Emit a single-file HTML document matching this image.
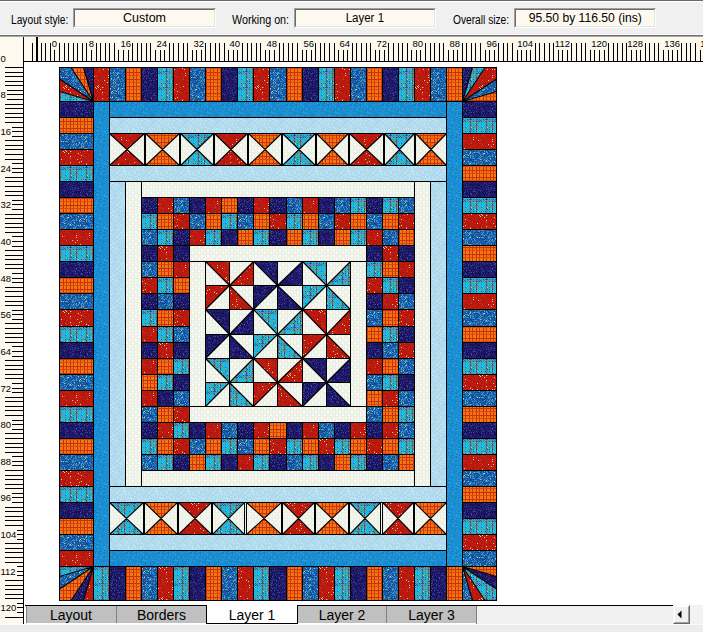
<!DOCTYPE html>
<html><head><meta charset="utf-8">
<style>
html,body{margin:0;padding:0;}
body{width:703px;height:632px;overflow:hidden;position:relative;background:#f0f0f0;font-family:"Liberation Sans",sans-serif;}
.abs{position:absolute;}
.lbl{position:absolute;font-size:12px;color:#000;white-space:nowrap;line-height:14px;transform-origin:0 0;}
.box{position:absolute;box-sizing:border-box;border-top:1px solid #a0a0a0;border-left:1px solid #a0a0a0;border-right:1px solid #fff;border-bottom:1px solid #fff;}
.box>div{position:absolute;left:0;top:0;right:0;bottom:0;border-top:1px solid #696969;border-left:1px solid #696969;border-right:1px solid #e3e3e3;border-bottom:1px solid #e3e3e3;background:#fdf9ee;font-size:12.5px;line-height:16px;text-align:center;color:#000;white-space:nowrap;}
.box span{display:inline-block;}
.tab{position:absolute;top:606px;height:17px;background:#c0c0c0;font-size:14px;line-height:19px;text-align:center;color:#000;box-sizing:border-box;}
svg text.rl{font-family:"Liberation Sans",sans-serif;font-size:9.5px;fill:#000;}
.ln{stroke:#000;stroke-width:1.1;fill:none;}
.ln2{stroke:#000;stroke-width:1;fill:none;shape-rendering:crispEdges;}
</style></head><body>
<!-- toolbar -->
<div class="abs" style="left:0;top:0;width:703px;height:1px;background:#6b6b6b"></div>
<div class="abs" style="left:0;top:1px;width:703px;height:1px;background:#fff"></div>
<div class="abs" style="left:0;top:34px;width:703px;height:1px;background:#fff"></div>
<div class="abs" style="left:0;top:35px;width:703px;height:1px;background:#6e6e6e"></div>
<div class="abs" style="left:0;top:36px;width:703px;height:1px;background:#a8a8a8"></div>
<div class="lbl" style="left:10.6px;top:12.5px;transform:scaleX(0.852)">Layout style:</div>
<div class="box" style="left:73px;top:8px;width:143px;height:20px"><div><span>Custom</span></div></div>
<div class="lbl" style="left:232.1px;top:12.5px;transform:scaleX(0.894)">Working on:</div>
<div class="box" style="left:294px;top:8px;width:142px;height:20px"><div><span style="transform:scaleX(0.92)">Layer 1</span></div></div>
<div class="lbl" style="left:453.1px;top:12.5px;transform:scaleX(0.85)">Overall size:</div>
<div class="box" style="left:514px;top:8px;width:142px;height:20px"><div><span style="transform:scaleX(0.972)">95.50 by 116.50 (ins)</span></div></div>

<!-- rulers + canvas -->
<svg class="abs" style="left:0;top:0" width="703" height="632" viewBox="0 0 703 632">
<defs>
<pattern id="pN" width="32" height="32" patternUnits="userSpaceOnUse"><rect width="32" height="32" fill="#1e1868"/><path d="M20 9h1v1h-1zM25 3h1v1h-1zM4 6h1v1h-1zM23 3h1v1h-1zM13 2h1v1h-1zM5 27h1v1h-1zM26 4h1v1h-1zM15 5h1v1h-1zM27 3h1v1h-1zM7 14h1v1h-1zM3 25h1v1h-1zM3 14h1v1h-1zM2 8h1v1h-1zM18 26h1v1h-1zM9 7h1v1h-1zM19 11h1v1h-1zM6 12h1v1h-1zM23 6h1v1h-1zM4 3h1v1h-1zM13 31h1v1h-1zM27 20h1v1h-1zM29 29h1v1h-1zM23 19h1v1h-1zM15 11h1v1h-1zM15 5h1v1h-1zM19 31h1v1h-1zM21 28h1v1h-1zM18 4h1v1h-1zM7 26h1v1h-1zM10 21h1v1h-1zM9 31h1v1h-1zM26 2h1v1h-1zM4 20h1v1h-1zM21 22h1v1h-1zM31 29h1v1h-1zM4 5h1v1h-1zM17 30h1v1h-1zM4 3h1v1h-1zM19 28h1v1h-1zM18 24h1v1h-1zM22 1h1v1h-1zM29 22h1v1h-1zM10 7h1v1h-1zM31 3h1v1h-1zM13 18h1v1h-1zM8 15h1v1h-1zM25 25h1v1h-1zM31 5h1v1h-1zM10 28h1v1h-1zM25 17h1v1h-1zM8 27h1v1h-1zM17 26h1v1h-1zM22 24h1v1h-1zM14 9h1v1h-1zM5 11h1v1h-1zM9 14h1v1h-1zM14 0h1v1h-1zM31 11h1v1h-1zM16 18h1v1h-1zM0 9h1v1h-1zM26 23h1v1h-1zM20 8h1v1h-1zM3 29h1v1h-1zM25 25h1v1h-1zM25 25h1v1h-1zM6 30h1v1h-1zM25 3h1v1h-1zM12 4h1v1h-1zM13 28h1v1h-1zM10 7h1v1h-1zM21 3h1v1h-1zM6 0h1v1h-1zM9 6h1v1h-1zM23 1h1v1h-1zM4 13h1v1h-1zM24 9h1v1h-1zM16 22h1v1h-1zM23 30h1v1h-1zM7 7h1v1h-1zM31 29h1v1h-1zM30 30h1v1h-1zM19 5h1v1h-1zM9 6h1v1h-1zM21 16h1v1h-1zM30 10h1v1h-1zM1 13h1v1h-1zM23 9h1v1h-1zM1 19h1v1h-1zM5 16h1v1h-1zM23 10h1v1h-1zM22 14h1v1h-1zM21 14h1v1h-1zM12 15h1v1h-1zM25 14h1v1h-1zM12 31h1v1h-1zM22 1h1v1h-1zM1 17h1v1h-1zM30 16h1v1h-1zM12 22h1v1h-1zM28 22h1v1h-1zM23 5h1v1h-1zM14 6h1v1h-1zM14 30h1v1h-1zM12 21h1v1h-1zM13 30h1v1h-1zM0 30h1v1h-1zM22 5h1v1h-1zM7 24h1v1h-1zM12 30h1v1h-1zM11 27h1v1h-1zM21 5h1v1h-1zM25 29h1v1h-1zM25 5h1v1h-1zM10 10h1v1h-1zM8 1h1v1h-1zM9 29h1v1h-1zM9 30h1v1h-1zM22 9h1v1h-1zM8 1h1v1h-1zM0 6h1v1h-1zM8 27h1v1h-1zM12 13h1v1h-1zM1 16h1v1h-1zM13 18h1v1h-1zM15 20h1v1h-1zM16 26h1v1h-1zM8 3h1v1h-1zM22 29h1v1h-1zM26 8h1v1h-1zM9 1h1v1h-1zM28 11h1v1h-1zM0 9h1v1h-1zM11 9h1v1h-1zM30 7h1v1h-1zM3 20h1v1h-1zM30 6h1v1h-1zM3 15h1v1h-1zM12 17h1v1h-1zM2 6h1v1h-1zM28 1h1v1h-1zM4 28h1v1h-1zM20 12h1v1h-1zM17 28h1v1h-1zM30 15h1v1h-1zM16 12h1v1h-1zM28 8h1v1h-1zM26 7h1v1h-1zM25 28h1v1h-1zM20 4h1v1h-1zM15 27h1v1h-1zM4 13h1v1h-1zM19 7h1v1h-1zM9 23h1v1h-1zM9 16h1v1h-1zM8 29h1v1h-1zM14 6h1v1h-1zM25 31h1v1h-1zM10 14h1v1h-1zM10 27h1v1h-1zM25 21h1v1h-1zM26 12h1v1h-1zM22 20h1v1h-1zM5 23h1v1h-1zM1 21h1v1h-1zM29 28h1v1h-1zM1 24h1v1h-1zM21 18h1v1h-1zM4 7h1v1h-1zM14 6h1v1h-1zM5 16h1v1h-1zM17 2h1v1h-1zM11 17h1v1h-1zM8 27h1v1h-1zM16 25h1v1h-1zM9 31h1v1h-1zM20 5h1v1h-1zM17 3h1v1h-1zM11 27h1v1h-1zM4 17h1v1h-1zM1 5h1v1h-1zM16 5h1v1h-1zM14 4h1v1h-1zM16 7h1v1h-1zM29 0h1v1h-1zM21 26h1v1h-1zM17 8h1v1h-1zM2 15h1v1h-1zM7 10h1v1h-1zM16 3h1v1h-1zM11 12h1v1h-1zM19 19h1v1h-1zM13 18h1v1h-1zM28 11h1v1h-1zM17 22h1v1h-1zM1 16h1v1h-1zM2 0h1v1h-1zM1 12h1v1h-1zM30 15h1v1h-1zM28 6h1v1h-1zM27 31h1v1h-1zM25 19h1v1h-1zM13 14h1v1h-1zM21 12h1v1h-1zM8 25h1v1h-1z" fill="#2e3894"/><path d="M22 3h1v1h-1zM8 0h1v1h-1zM4 16h1v1h-1zM27 10h1v1h-1zM3 5h1v1h-1zM24 18h1v1h-1zM15 18h1v1h-1zM2 29h1v1h-1zM11 10h1v1h-1zM17 28h1v1h-1zM0 16h1v1h-1zM23 21h1v1h-1zM20 15h1v1h-1zM2 19h1v1h-1zM13 22h1v1h-1zM11 0h1v1h-1zM21 24h1v1h-1zM5 30h1v1h-1zM17 12h1v1h-1zM15 0h1v1h-1zM5 16h1v1h-1zM5 9h1v1h-1zM25 2h1v1h-1zM25 1h1v1h-1zM19 19h1v1h-1zM14 5h1v1h-1zM9 24h1v1h-1zM20 31h1v1h-1zM9 18h1v1h-1zM9 2h1v1h-1zM27 8h1v1h-1zM1 14h1v1h-1zM5 1h1v1h-1zM2 8h1v1h-1zM23 6h1v1h-1zM24 28h1v1h-1zM3 1h1v1h-1zM15 31h1v1h-1zM16 0h1v1h-1zM29 4h1v1h-1zM5 4h1v1h-1zM30 16h1v1h-1zM4 16h1v1h-1zM15 13h1v1h-1zM14 29h1v1h-1zM31 24h1v1h-1zM4 30h1v1h-1zM18 2h1v1h-1zM12 4h1v1h-1zM9 21h1v1h-1zM16 19h1v1h-1zM8 0h1v1h-1zM30 3h1v1h-1zM31 17h1v1h-1zM6 13h1v1h-1zM31 18h1v1h-1zM18 29h1v1h-1zM29 29h1v1h-1zM7 12h1v1h-1zM19 5h1v1h-1zM30 1h1v1h-1zM18 29h1v1h-1zM4 28h1v1h-1zM17 24h1v1h-1zM13 13h1v1h-1zM4 5h1v1h-1zM9 16h1v1h-1zM23 8h1v1h-1zM17 7h1v1h-1zM23 14h1v1h-1zM31 31h1v1h-1zM25 1h1v1h-1zM10 0h1v1h-1zM31 28h1v1h-1zM25 19h1v1h-1zM9 26h1v1h-1zM22 24h1v1h-1zM20 7h1v1h-1zM21 0h1v1h-1zM20 21h1v1h-1zM25 7h1v1h-1zM12 0h1v1h-1zM18 16h1v1h-1zM23 4h1v1h-1zM25 24h1v1h-1zM4 23h1v1h-1zM27 17h1v1h-1zM3 17h1v1h-1zM6 3h1v1h-1zM18 9h1v1h-1zM15 17h1v1h-1zM27 20h1v1h-1zM12 23h1v1h-1zM27 1h1v1h-1zM25 13h1v1h-1zM5 3h1v1h-1zM26 28h1v1h-1zM8 18h1v1h-1zM31 3h1v1h-1zM8 10h1v1h-1zM30 26h1v1h-1zM21 18h1v1h-1zM19 16h1v1h-1zM16 25h1v1h-1zM15 19h1v1h-1zM30 25h1v1h-1zM7 10h1v1h-1zM10 4h1v1h-1zM13 31h1v1h-1zM14 28h1v1h-1zM21 28h1v1h-1zM27 8h1v1h-1zM12 15h1v1h-1zM5 11h1v1h-1zM21 5h1v1h-1zM20 15h1v1h-1zM23 16h1v1h-1zM12 1h1v1h-1zM26 24h1v1h-1zM26 13h1v1h-1zM24 17h1v1h-1zM21 3h1v1h-1zM31 17h1v1h-1zM23 8h1v1h-1zM13 5h1v1h-1zM17 15h1v1h-1zM24 25h1v1h-1zM28 27h1v1h-1zM19 1h1v1h-1zM8 2h1v1h-1zM27 30h1v1h-1zM31 0h1v1h-1zM4 25h1v1h-1zM29 28h1v1h-1zM15 6h1v1h-1zM14 9h1v1h-1zM9 6h1v1h-1zM29 5h1v1h-1zM2 0h1v1h-1zM8 14h1v1h-1zM2 19h1v1h-1zM8 16h1v1h-1zM27 7h1v1h-1zM6 4h1v1h-1zM19 12h1v1h-1zM24 16h1v1h-1zM14 0h1v1h-1zM0 19h1v1h-1zM29 17h1v1h-1zM20 15h1v1h-1zM30 15h1v1h-1zM15 1h1v1h-1zM26 19h1v1h-1zM3 1h1v1h-1zM12 31h1v1h-1zM26 5h1v1h-1zM16 14h1v1h-1zM27 23h1v1h-1zM14 31h1v1h-1zM2 21h1v1h-1zM26 23h1v1h-1zM25 12h1v1h-1zM0 18h1v1h-1zM4 13h1v1h-1zM31 12h1v1h-1zM19 12h1v1h-1zM14 29h1v1h-1zM14 16h1v1h-1zM18 6h1v1h-1zM31 11h1v1h-1zM14 31h1v1h-1zM26 3h1v1h-1zM9 25h1v1h-1zM3 13h1v1h-1zM1 9h1v1h-1zM26 3h1v1h-1zM3 11h1v1h-1zM25 28h1v1h-1zM20 7h1v1h-1zM5 10h1v1h-1zM21 12h1v1h-1zM11 29h1v1h-1zM2 19h1v1h-1zM24 23h1v1h-1zM21 28h1v1h-1zM10 6h1v1h-1zM0 5h1v1h-1zM17 5h1v1h-1zM22 26h1v1h-1zM7 13h1v1h-1zM24 22h1v1h-1zM19 27h1v1h-1zM5 3h1v1h-1zM30 12h1v1h-1zM23 28h1v1h-1zM12 20h1v1h-1zM23 30h1v1h-1zM1 26h1v1h-1zM15 25h1v1h-1zM2 24h1v1h-1zM2 29h1v1h-1zM4 3h1v1h-1zM16 12h1v1h-1zM4 21h1v1h-1zM23 17h1v1h-1zM21 2h1v1h-1zM16 20h1v1h-1zM17 19h1v1h-1zM0 4h1v1h-1zM1 14h1v1h-1zM6 30h1v1h-1zM29 24h1v1h-1zM16 27h1v1h-1zM31 8h1v1h-1zM31 11h1v1h-1zM0 19h1v1h-1zM9 15h1v1h-1zM20 20h1v1h-1zM29 23h1v1h-1zM5 12h1v1h-1zM25 10h1v1h-1zM15 26h1v1h-1zM4 2h1v1h-1zM30 20h1v1h-1zM10 27h1v1h-1z" fill="#120e44"/><path d="M6 4h1v1h-1zM16 5h1v1h-1zM13 6h1v1h-1zM26 31h1v1h-1zM28 11h1v1h-1zM14 8h1v1h-1zM26 29h1v1h-1zM15 7h1v1h-1zM18 18h1v1h-1zM17 17h1v1h-1zM23 16h1v1h-1zM16 12h1v1h-1zM28 15h1v1h-1zM11 15h1v1h-1zM15 9h1v1h-1zM18 12h1v1h-1zM20 4h1v1h-1zM25 16h1v1h-1zM15 14h1v1h-1zM6 29h1v1h-1zM2 6h1v1h-1zM0 30h1v1h-1zM14 28h1v1h-1zM23 2h1v1h-1zM18 14h1v1h-1zM7 3h1v1h-1zM12 12h1v1h-1zM4 23h1v1h-1zM11 28h1v1h-1zM16 0h1v1h-1z" fill="#4050ac"/><path d="M6 22h1v1h-1zM13 2h1v1h-1zM23 21h1v1h-1zM9 2h1v1h-1zM13 16h1v1h-1zM2 13h1v1h-1zM0 20h1v1h-1zM26 23h1v1h-1zM11 19h1v1h-1zM4 13h1v1h-1zM2 31h1v1h-1zM30 4h1v1h-1zM26 6h1v1h-1zM25 9h1v1h-1zM5 10h1v1h-1zM25 17h1v1h-1zM26 18h1v1h-1zM19 26h1v1h-1zM3 19h1v1h-1zM22 26h1v1h-1zM26 1h1v1h-1zM23 12h1v1h-1zM25 25h1v1h-1zM13 0h1v1h-1zM27 10h1v1h-1zM27 7h1v1h-1zM5 25h1v1h-1zM23 29h1v1h-1zM10 8h1v1h-1zM0 3h1v1h-1zM9 25h1v1h-1zM5 23h1v1h-1zM10 9h1v1h-1zM22 18h1v1h-1zM10 10h1v1h-1zM4 6h1v1h-1zM24 31h1v1h-1zM12 19h1v1h-1zM8 2h1v1h-1zM30 20h1v1h-1zM3 24h1v1h-1zM5 10h1v1h-1zM14 25h1v1h-1zM12 30h1v1h-1zM11 13h1v1h-1zM2 25h1v1h-1zM10 24h1v1h-1zM22 7h1v1h-1zM9 15h1v1h-1zM12 2h1v1h-1zM2 20h1v1h-1zM7 24h1v1h-1zM29 19h1v1h-1zM26 19h1v1h-1zM15 27h1v1h-1zM24 23h1v1h-1zM28 28h1v1h-1zM11 1h1v1h-1zM0 31h1v1h-1zM29 15h1v1h-1zM28 29h1v1h-1zM11 30h1v1h-1zM25 6h1v1h-1zM4 8h1v1h-1zM22 27h1v1h-1zM23 5h1v1h-1zM28 2h1v1h-1zM2 8h1v1h-1zM5 20h1v1h-1zM5 3h1v1h-1zM24 8h1v1h-1zM1 4h1v1h-1zM7 12h1v1h-1zM8 31h1v1h-1zM18 10h1v1h-1zM14 4h1v1h-1zM22 16h1v1h-1zM10 20h1v1h-1zM17 29h1v1h-1zM9 16h1v1h-1zM30 13h1v1h-1zM16 15h1v1h-1zM20 23h1v1h-1zM2 12h1v1h-1zM11 25h1v1h-1zM10 17h1v1h-1zM20 24h1v1h-1zM10 16h1v1h-1zM7 3h1v1h-1zM23 28h1v1h-1zM6 16h1v1h-1zM25 23h1v1h-1zM16 24h1v1h-1zM23 9h1v1h-1zM23 21h1v1h-1zM5 28h1v1h-1zM14 11h1v1h-1zM3 18h1v1h-1zM16 19h1v1h-1zM20 0h1v1h-1zM2 14h1v1h-1zM9 18h1v1h-1z" fill="#2a1c78"/></pattern>
<pattern id="pR" width="32" height="32" patternUnits="userSpaceOnUse"><rect width="32" height="32" fill="#bc1a10"/><path d="M27 26h1v1h-1zM23 3h1v1h-1zM8 31h1v1h-1zM14 2h1v1h-1zM1 3h1v1h-1zM0 22h1v1h-1zM19 6h1v1h-1zM22 14h1v1h-1zM26 19h1v1h-1zM8 13h1v1h-1zM23 30h1v1h-1zM10 8h1v1h-1zM0 15h1v1h-1zM9 28h1v1h-1zM6 4h1v1h-1zM9 17h1v1h-1zM25 16h1v1h-1zM0 3h1v1h-1zM22 28h1v1h-1zM31 15h1v1h-1zM10 0h1v1h-1zM2 3h1v1h-1zM1 25h1v1h-1zM11 15h1v1h-1zM10 3h1v1h-1zM6 0h1v1h-1zM12 9h1v1h-1zM26 12h1v1h-1zM26 11h1v1h-1zM19 4h1v1h-1zM19 3h1v1h-1zM30 0h1v1h-1zM24 27h1v1h-1zM29 5h1v1h-1zM28 11h1v1h-1zM14 6h1v1h-1zM16 14h1v1h-1zM2 7h1v1h-1zM21 16h1v1h-1zM3 17h1v1h-1zM27 16h1v1h-1zM18 13h1v1h-1zM5 0h1v1h-1zM10 16h1v1h-1zM15 12h1v1h-1zM10 20h1v1h-1zM12 24h1v1h-1zM21 15h1v1h-1zM24 30h1v1h-1zM30 0h1v1h-1zM1 27h1v1h-1zM14 19h1v1h-1zM13 25h1v1h-1zM4 10h1v1h-1zM9 2h1v1h-1zM1 7h1v1h-1zM6 10h1v1h-1zM22 9h1v1h-1zM1 1h1v1h-1zM2 8h1v1h-1zM2 4h1v1h-1zM2 4h1v1h-1zM23 12h1v1h-1zM4 24h1v1h-1zM6 15h1v1h-1zM13 13h1v1h-1zM7 2h1v1h-1zM2 5h1v1h-1zM18 30h1v1h-1zM6 8h1v1h-1zM6 13h1v1h-1zM18 20h1v1h-1zM21 27h1v1h-1zM16 1h1v1h-1zM22 16h1v1h-1zM18 3h1v1h-1zM23 20h1v1h-1zM30 18h1v1h-1zM1 26h1v1h-1zM1 27h1v1h-1zM6 22h1v1h-1zM30 3h1v1h-1zM13 5h1v1h-1zM18 10h1v1h-1zM27 0h1v1h-1zM12 18h1v1h-1zM3 0h1v1h-1zM22 31h1v1h-1zM6 31h1v1h-1zM11 31h1v1h-1zM22 16h1v1h-1zM10 18h1v1h-1zM13 14h1v1h-1zM31 10h1v1h-1zM7 5h1v1h-1zM31 6h1v1h-1zM20 22h1v1h-1zM6 25h1v1h-1zM25 5h1v1h-1zM27 1h1v1h-1zM23 13h1v1h-1zM19 16h1v1h-1zM27 10h1v1h-1zM24 14h1v1h-1zM29 8h1v1h-1zM2 22h1v1h-1zM20 9h1v1h-1zM28 20h1v1h-1zM10 29h1v1h-1zM28 16h1v1h-1zM14 8h1v1h-1zM21 29h1v1h-1zM15 12h1v1h-1zM17 19h1v1h-1zM9 9h1v1h-1zM15 20h1v1h-1zM22 10h1v1h-1zM15 20h1v1h-1zM12 16h1v1h-1zM6 10h1v1h-1zM6 12h1v1h-1zM24 9h1v1h-1zM9 19h1v1h-1zM19 27h1v1h-1zM17 12h1v1h-1zM6 6h1v1h-1zM17 13h1v1h-1zM24 29h1v1h-1zM2 0h1v1h-1zM25 27h1v1h-1zM14 18h1v1h-1zM29 1h1v1h-1zM9 16h1v1h-1zM25 0h1v1h-1zM15 27h1v1h-1zM26 14h1v1h-1zM14 11h1v1h-1zM7 29h1v1h-1zM27 20h1v1h-1zM16 6h1v1h-1zM26 15h1v1h-1zM25 10h1v1h-1zM16 27h1v1h-1zM30 29h1v1h-1zM1 26h1v1h-1zM11 20h1v1h-1zM0 24h1v1h-1zM31 6h1v1h-1zM2 16h1v1h-1zM13 10h1v1h-1zM12 22h1v1h-1zM6 29h1v1h-1zM13 30h1v1h-1z" fill="#c82212"/><path d="M1 23h1v1h-1zM21 26h1v1h-1zM29 13h1v1h-1zM11 25h1v1h-1zM7 22h1v1h-1zM3 16h1v1h-1zM17 24h1v1h-1zM25 3h1v1h-1zM0 4h1v1h-1zM26 26h1v1h-1zM22 16h1v1h-1zM6 14h1v1h-1zM19 25h1v1h-1zM14 25h1v1h-1zM29 13h1v1h-1zM10 8h1v1h-1zM4 12h1v1h-1zM30 14h1v1h-1zM9 22h1v1h-1zM26 29h1v1h-1zM18 8h1v1h-1zM30 22h1v1h-1zM14 17h1v1h-1zM24 16h1v1h-1zM27 11h1v1h-1zM30 0h1v1h-1zM17 22h1v1h-1zM15 19h1v1h-1zM20 30h1v1h-1zM31 27h1v1h-1zM5 23h1v1h-1zM9 19h1v1h-1zM24 3h1v1h-1zM5 20h1v1h-1zM8 22h1v1h-1zM0 0h1v1h-1zM13 4h1v1h-1zM18 16h1v1h-1zM6 9h1v1h-1zM14 11h1v1h-1zM28 22h1v1h-1zM9 13h1v1h-1zM25 10h1v1h-1zM5 19h1v1h-1zM12 31h1v1h-1zM13 5h1v1h-1zM28 7h1v1h-1zM7 16h1v1h-1zM26 14h1v1h-1zM8 30h1v1h-1zM31 3h1v1h-1zM30 29h1v1h-1zM9 31h1v1h-1zM15 31h1v1h-1zM10 0h1v1h-1zM10 20h1v1h-1zM29 31h1v1h-1zM18 29h1v1h-1zM23 27h1v1h-1zM26 4h1v1h-1zM11 23h1v1h-1zM1 1h1v1h-1zM2 21h1v1h-1zM6 30h1v1h-1zM31 9h1v1h-1zM2 13h1v1h-1zM26 8h1v1h-1zM21 6h1v1h-1zM23 21h1v1h-1zM30 13h1v1h-1zM18 27h1v1h-1zM21 27h1v1h-1zM16 3h1v1h-1zM18 18h1v1h-1zM22 31h1v1h-1zM25 21h1v1h-1zM17 22h1v1h-1zM13 31h1v1h-1zM7 21h1v1h-1zM12 20h1v1h-1zM19 8h1v1h-1zM5 2h1v1h-1zM25 25h1v1h-1zM3 25h1v1h-1zM19 6h1v1h-1zM0 2h1v1h-1zM12 30h1v1h-1zM3 24h1v1h-1zM9 5h1v1h-1zM13 2h1v1h-1zM29 11h1v1h-1zM6 11h1v1h-1zM2 26h1v1h-1zM6 0h1v1h-1zM23 8h1v1h-1zM19 16h1v1h-1zM19 11h1v1h-1zM26 2h1v1h-1zM20 1h1v1h-1zM27 3h1v1h-1zM31 2h1v1h-1zM7 26h1v1h-1zM25 28h1v1h-1zM4 0h1v1h-1zM24 9h1v1h-1zM30 26h1v1h-1zM6 5h1v1h-1zM30 13h1v1h-1zM9 0h1v1h-1zM27 0h1v1h-1zM0 7h1v1h-1zM5 13h1v1h-1zM7 8h1v1h-1zM30 1h1v1h-1zM17 15h1v1h-1zM28 11h1v1h-1zM3 23h1v1h-1zM9 5h1v1h-1zM18 31h1v1h-1zM29 16h1v1h-1zM3 2h1v1h-1zM0 3h1v1h-1zM0 5h1v1h-1zM24 19h1v1h-1zM19 10h1v1h-1zM31 3h1v1h-1zM20 23h1v1h-1zM28 30h1v1h-1zM10 9h1v1h-1zM7 23h1v1h-1zM10 26h1v1h-1zM30 24h1v1h-1zM28 17h1v1h-1zM21 18h1v1h-1zM17 3h1v1h-1zM21 0h1v1h-1zM9 19h1v1h-1zM27 15h1v1h-1zM24 24h1v1h-1zM24 14h1v1h-1zM28 18h1v1h-1zM0 20h1v1h-1zM16 17h1v1h-1zM27 10h1v1h-1zM2 18h1v1h-1zM9 9h1v1h-1zM17 31h1v1h-1zM22 5h1v1h-1zM31 24h1v1h-1zM12 14h1v1h-1zM19 3h1v1h-1zM25 29h1v1h-1zM13 16h1v1h-1z" fill="#a81408"/><path d="M0 24h1v1h-1zM29 5h1v1h-1zM22 4h1v1h-1zM14 25h1v1h-1zM16 20h1v1h-1zM30 12h1v1h-1zM12 13h1v1h-1zM12 5h1v1h-1zM11 18h1v1h-1zM23 22h1v1h-1zM25 9h1v1h-1zM15 2h1v1h-1zM31 23h1v1h-1zM6 23h1v1h-1zM29 5h1v1h-1zM9 20h1v1h-1zM1 22h1v1h-1zM17 1h1v1h-1zM6 2h1v1h-1zM13 31h1v1h-1zM13 16h1v1h-1zM17 27h1v1h-1zM6 28h1v1h-1zM8 16h1v1h-1zM2 21h1v1h-1zM12 11h1v1h-1zM24 5h1v1h-1zM1 3h1v1h-1zM2 23h1v1h-1zM29 31h1v1h-1zM4 25h1v1h-1zM7 5h1v1h-1zM16 20h1v1h-1zM14 5h1v1h-1zM25 11h1v1h-1z" fill="#f0c888"/><path d="M28 10h1v1h-1zM23 15h1v1h-1zM14 11h1v1h-1zM2 16h1v1h-1zM22 3h1v1h-1zM1 3h1v1h-1zM16 30h1v1h-1zM3 6h1v1h-1zM9 20h1v1h-1zM0 12h1v1h-1zM19 28h1v1h-1zM6 30h1v1h-1zM20 23h1v1h-1zM16 24h1v1h-1zM7 23h1v1h-1z" fill="#a86030"/></pattern>
<pattern id="pB" width="32" height="32" patternUnits="userSpaceOnUse"><rect width="32" height="32" fill="#1a5aa6"/><path d="M30 24h1v1h-1zM10 28h1v1h-1zM15 9h1v1h-1zM0 29h1v1h-1zM12 2h1v1h-1zM10 14h1v1h-1zM4 23h1v1h-1zM8 28h1v1h-1zM6 24h1v1h-1zM1 4h1v1h-1zM28 21h1v1h-1zM20 14h1v1h-1zM30 7h1v1h-1zM23 9h1v1h-1zM21 14h1v1h-1zM3 11h1v1h-1zM28 9h1v1h-1zM28 9h1v1h-1zM17 26h1v1h-1zM26 15h1v1h-1zM9 1h1v1h-1zM17 18h1v1h-1zM21 10h1v1h-1zM16 31h1v1h-1zM6 20h1v1h-1zM29 30h1v1h-1zM7 9h1v1h-1zM3 13h1v1h-1zM30 18h1v1h-1zM7 16h1v1h-1zM12 23h1v1h-1zM27 16h1v1h-1zM15 15h1v1h-1zM6 24h1v1h-1zM18 26h1v1h-1zM10 3h1v1h-1zM18 9h1v1h-1zM1 28h1v1h-1zM21 8h1v1h-1zM28 0h1v1h-1zM18 11h1v1h-1zM23 27h1v1h-1zM2 26h1v1h-1zM13 17h1v1h-1zM11 8h1v1h-1zM11 14h1v1h-1zM11 12h1v1h-1zM5 5h1v1h-1zM31 17h1v1h-1zM11 13h1v1h-1zM8 12h1v1h-1zM19 12h1v1h-1zM0 4h1v1h-1zM26 3h1v1h-1zM22 21h1v1h-1zM18 31h1v1h-1zM5 0h1v1h-1zM26 30h1v1h-1zM8 17h1v1h-1zM15 11h1v1h-1zM23 2h1v1h-1zM10 23h1v1h-1zM0 22h1v1h-1zM28 4h1v1h-1zM7 22h1v1h-1zM15 20h1v1h-1zM24 3h1v1h-1zM18 6h1v1h-1zM31 28h1v1h-1zM1 8h1v1h-1zM1 15h1v1h-1zM5 14h1v1h-1zM11 10h1v1h-1zM6 19h1v1h-1zM16 1h1v1h-1zM1 6h1v1h-1zM12 16h1v1h-1zM1 29h1v1h-1zM15 28h1v1h-1zM6 22h1v1h-1zM6 11h1v1h-1zM2 17h1v1h-1zM7 29h1v1h-1zM31 17h1v1h-1zM7 7h1v1h-1zM7 25h1v1h-1zM8 14h1v1h-1zM14 9h1v1h-1zM29 25h1v1h-1zM10 1h1v1h-1zM24 26h1v1h-1zM2 25h1v1h-1zM3 23h1v1h-1zM21 25h1v1h-1zM15 21h1v1h-1zM27 20h1v1h-1zM25 3h1v1h-1zM20 9h1v1h-1zM22 15h1v1h-1zM27 0h1v1h-1zM23 6h1v1h-1zM11 4h1v1h-1zM20 27h1v1h-1zM12 1h1v1h-1zM14 8h1v1h-1zM26 25h1v1h-1zM29 2h1v1h-1zM2 2h1v1h-1zM17 17h1v1h-1zM2 6h1v1h-1zM16 7h1v1h-1zM0 27h1v1h-1zM15 2h1v1h-1zM18 7h1v1h-1zM19 22h1v1h-1zM10 7h1v1h-1zM3 17h1v1h-1zM5 29h1v1h-1zM9 28h1v1h-1zM7 8h1v1h-1zM18 26h1v1h-1zM18 17h1v1h-1zM15 5h1v1h-1zM18 29h1v1h-1zM14 24h1v1h-1zM12 23h1v1h-1zM29 19h1v1h-1zM30 30h1v1h-1zM19 1h1v1h-1zM15 21h1v1h-1zM14 12h1v1h-1zM24 25h1v1h-1zM0 22h1v1h-1zM10 15h1v1h-1zM20 20h1v1h-1zM31 17h1v1h-1zM18 13h1v1h-1zM18 3h1v1h-1zM1 10h1v1h-1zM4 22h1v1h-1zM28 3h1v1h-1zM24 28h1v1h-1zM22 6h1v1h-1zM14 9h1v1h-1zM26 21h1v1h-1zM22 8h1v1h-1zM12 17h1v1h-1zM6 30h1v1h-1zM17 8h1v1h-1zM26 6h1v1h-1zM0 26h1v1h-1zM7 31h1v1h-1zM25 9h1v1h-1zM26 17h1v1h-1zM7 24h1v1h-1zM28 29h1v1h-1zM18 22h1v1h-1zM18 22h1v1h-1zM25 24h1v1h-1zM20 0h1v1h-1zM31 24h1v1h-1zM28 19h1v1h-1zM11 19h1v1h-1zM9 27h1v1h-1zM24 14h1v1h-1zM5 21h1v1h-1zM20 15h1v1h-1zM20 13h1v1h-1zM27 0h1v1h-1zM1 3h1v1h-1zM16 31h1v1h-1zM19 19h1v1h-1zM27 27h1v1h-1zM24 29h1v1h-1zM22 2h1v1h-1zM22 28h1v1h-1zM0 4h1v1h-1zM14 6h1v1h-1zM26 23h1v1h-1zM25 9h1v1h-1zM12 26h1v1h-1zM31 25h1v1h-1zM28 21h1v1h-1zM5 10h1v1h-1zM23 20h1v1h-1zM23 4h1v1h-1zM19 11h1v1h-1zM7 18h1v1h-1zM21 26h1v1h-1zM10 18h1v1h-1zM13 12h1v1h-1zM26 11h1v1h-1zM3 6h1v1h-1zM22 2h1v1h-1zM26 0h1v1h-1zM0 19h1v1h-1zM0 19h1v1h-1zM25 6h1v1h-1zM0 1h1v1h-1zM12 11h1v1h-1zM31 17h1v1h-1zM9 12h1v1h-1zM26 7h1v1h-1zM9 10h1v1h-1zM6 1h1v1h-1zM6 4h1v1h-1zM10 31h1v1h-1zM29 27h1v1h-1zM3 0h1v1h-1zM20 9h1v1h-1zM15 22h1v1h-1zM17 10h1v1h-1zM2 17h1v1h-1zM6 4h1v1h-1zM22 12h1v1h-1zM28 24h1v1h-1zM1 3h1v1h-1zM14 25h1v1h-1zM2 28h1v1h-1zM3 15h1v1h-1zM15 14h1v1h-1zM2 10h1v1h-1zM11 20h1v1h-1zM0 29h1v1h-1zM19 26h1v1h-1z" fill="#3090cc"/><path d="M16 31h1v1h-1zM4 15h1v1h-1zM24 14h1v1h-1zM26 19h1v1h-1zM25 31h1v1h-1zM1 15h1v1h-1zM5 11h1v1h-1zM10 22h1v1h-1zM24 11h1v1h-1zM0 18h1v1h-1zM25 23h1v1h-1zM7 21h1v1h-1zM24 21h1v1h-1zM25 4h1v1h-1zM7 27h1v1h-1zM22 15h1v1h-1zM24 12h1v1h-1zM29 18h1v1h-1zM22 15h1v1h-1zM27 2h1v1h-1zM17 1h1v1h-1zM21 9h1v1h-1zM15 8h1v1h-1zM5 12h1v1h-1zM17 8h1v1h-1zM28 29h1v1h-1zM15 10h1v1h-1zM23 22h1v1h-1zM13 25h1v1h-1zM24 13h1v1h-1zM19 30h1v1h-1zM13 14h1v1h-1zM28 8h1v1h-1zM16 28h1v1h-1zM23 15h1v1h-1zM25 13h1v1h-1zM8 7h1v1h-1zM5 17h1v1h-1zM24 1h1v1h-1zM9 19h1v1h-1zM0 24h1v1h-1zM5 11h1v1h-1zM14 20h1v1h-1zM12 6h1v1h-1zM4 23h1v1h-1zM19 12h1v1h-1zM4 19h1v1h-1zM5 14h1v1h-1zM18 8h1v1h-1zM25 18h1v1h-1zM22 25h1v1h-1zM29 8h1v1h-1zM17 11h1v1h-1zM1 23h1v1h-1zM22 26h1v1h-1zM1 29h1v1h-1zM15 25h1v1h-1zM22 6h1v1h-1zM11 18h1v1h-1zM7 17h1v1h-1zM14 2h1v1h-1zM25 2h1v1h-1zM10 27h1v1h-1zM12 19h1v1h-1zM9 24h1v1h-1zM2 19h1v1h-1zM11 14h1v1h-1zM31 16h1v1h-1zM27 22h1v1h-1zM0 7h1v1h-1zM18 2h1v1h-1zM3 15h1v1h-1zM7 2h1v1h-1zM20 13h1v1h-1zM22 5h1v1h-1zM26 25h1v1h-1zM14 17h1v1h-1zM5 22h1v1h-1zM27 28h1v1h-1zM21 28h1v1h-1zM3 13h1v1h-1zM27 8h1v1h-1zM31 12h1v1h-1zM2 16h1v1h-1zM11 10h1v1h-1zM15 16h1v1h-1zM15 3h1v1h-1zM10 22h1v1h-1zM22 26h1v1h-1zM5 12h1v1h-1zM19 8h1v1h-1zM8 31h1v1h-1zM30 15h1v1h-1zM15 0h1v1h-1zM28 8h1v1h-1zM22 19h1v1h-1zM8 9h1v1h-1zM15 21h1v1h-1zM7 27h1v1h-1zM10 9h1v1h-1zM29 25h1v1h-1zM13 7h1v1h-1zM18 0h1v1h-1zM23 31h1v1h-1zM13 2h1v1h-1zM3 17h1v1h-1zM19 12h1v1h-1zM7 19h1v1h-1zM28 7h1v1h-1zM10 20h1v1h-1zM28 29h1v1h-1zM23 18h1v1h-1zM10 4h1v1h-1zM2 0h1v1h-1zM29 31h1v1h-1zM5 21h1v1h-1zM16 6h1v1h-1zM31 27h1v1h-1zM31 12h1v1h-1zM20 0h1v1h-1zM22 5h1v1h-1zM18 16h1v1h-1zM15 5h1v1h-1zM8 1h1v1h-1zM1 25h1v1h-1zM9 18h1v1h-1zM23 11h1v1h-1zM10 6h1v1h-1zM19 20h1v1h-1zM24 11h1v1h-1zM22 20h1v1h-1zM14 23h1v1h-1zM8 23h1v1h-1zM16 15h1v1h-1zM3 2h1v1h-1zM6 25h1v1h-1zM3 13h1v1h-1zM31 27h1v1h-1zM31 10h1v1h-1zM19 5h1v1h-1zM9 14h1v1h-1zM10 8h1v1h-1zM28 25h1v1h-1zM5 2h1v1h-1zM28 30h1v1h-1zM12 13h1v1h-1zM23 0h1v1h-1zM2 27h1v1h-1zM9 18h1v1h-1zM4 3h1v1h-1zM26 21h1v1h-1zM4 28h1v1h-1zM0 11h1v1h-1zM10 24h1v1h-1zM18 0h1v1h-1zM28 22h1v1h-1zM12 30h1v1h-1zM5 20h1v1h-1zM29 27h1v1h-1zM9 25h1v1h-1zM5 3h1v1h-1zM21 19h1v1h-1zM26 23h1v1h-1zM30 8h1v1h-1zM19 21h1v1h-1zM1 12h1v1h-1zM14 28h1v1h-1zM5 9h1v1h-1zM23 26h1v1h-1zM23 15h1v1h-1zM28 25h1v1h-1zM16 7h1v1h-1zM14 11h1v1h-1zM12 7h1v1h-1zM14 16h1v1h-1zM6 12h1v1h-1zM16 31h1v1h-1zM14 29h1v1h-1zM14 7h1v1h-1zM5 26h1v1h-1zM4 28h1v1h-1zM8 7h1v1h-1zM6 29h1v1h-1zM25 10h1v1h-1zM12 30h1v1h-1zM5 8h1v1h-1zM23 3h1v1h-1zM25 15h1v1h-1zM3 23h1v1h-1zM2 0h1v1h-1zM13 29h1v1h-1zM19 7h1v1h-1zM8 27h1v1h-1zM5 12h1v1h-1zM7 22h1v1h-1zM10 23h1v1h-1zM21 0h1v1h-1zM16 7h1v1h-1zM15 23h1v1h-1zM22 31h1v1h-1zM2 22h1v1h-1zM6 22h1v1h-1zM20 7h1v1h-1zM2 15h1v1h-1z" fill="#0e4a94"/><path d="M16 22h1v1h-1zM12 28h1v1h-1zM1 28h1v1h-1zM7 1h1v1h-1zM31 7h1v1h-1zM4 16h1v1h-1zM11 9h1v1h-1zM18 24h1v1h-1zM9 16h1v1h-1zM17 28h1v1h-1zM0 1h1v1h-1zM21 9h1v1h-1zM31 30h1v1h-1zM2 2h1v1h-1zM4 11h1v1h-1zM25 30h1v1h-1zM10 28h1v1h-1zM25 14h1v1h-1zM4 23h1v1h-1zM21 13h1v1h-1zM19 8h1v1h-1zM2 13h1v1h-1zM10 23h1v1h-1zM29 21h1v1h-1zM29 24h1v1h-1zM22 20h1v1h-1zM0 21h1v1h-1zM30 21h1v1h-1zM14 1h1v1h-1zM15 29h1v1h-1zM2 9h1v1h-1zM9 17h1v1h-1zM24 17h1v1h-1zM4 16h1v1h-1zM22 8h1v1h-1zM2 6h1v1h-1zM12 27h1v1h-1zM6 23h1v1h-1zM18 15h1v1h-1zM9 4h1v1h-1zM19 21h1v1h-1zM23 15h1v1h-1zM22 25h1v1h-1zM21 3h1v1h-1zM21 20h1v1h-1zM30 23h1v1h-1zM15 15h1v1h-1zM22 9h1v1h-1zM8 13h1v1h-1zM0 29h1v1h-1zM25 28h1v1h-1zM25 19h1v1h-1zM10 4h1v1h-1zM9 19h1v1h-1zM19 16h1v1h-1zM21 4h1v1h-1zM12 5h1v1h-1zM11 19h1v1h-1zM22 29h1v1h-1zM22 27h1v1h-1zM4 31h1v1h-1zM20 11h1v1h-1zM17 16h1v1h-1zM1 10h1v1h-1zM17 15h1v1h-1zM1 13h1v1h-1zM3 25h1v1h-1zM28 12h1v1h-1zM18 6h1v1h-1zM12 15h1v1h-1zM3 8h1v1h-1zM3 5h1v1h-1zM4 21h1v1h-1zM8 0h1v1h-1zM12 17h1v1h-1zM0 20h1v1h-1zM1 13h1v1h-1zM20 20h1v1h-1zM1 31h1v1h-1zM25 21h1v1h-1zM11 3h1v1h-1z" fill="#38acd4"/><path d="M26 2h1v1h-1zM5 21h1v1h-1zM31 25h1v1h-1zM16 29h1v1h-1zM0 1h1v1h-1zM20 20h1v1h-1zM3 26h1v1h-1zM21 10h1v1h-1zM5 1h1v1h-1zM9 13h1v1h-1zM9 5h1v1h-1zM22 23h1v1h-1zM27 22h1v1h-1zM9 21h1v1h-1zM14 16h1v1h-1z" fill="#60a858"/><path d="M30 2h1v1h-1zM19 29h1v1h-1zM17 23h1v1h-1zM17 8h1v1h-1zM16 0h1v1h-1zM30 6h1v1h-1zM23 9h1v1h-1zM14 25h1v1h-1zM5 1h1v1h-1zM8 7h1v1h-1zM3 13h1v1h-1zM11 16h1v1h-1zM23 9h1v1h-1zM11 10h1v1h-1zM1 22h1v1h-1z" fill="#d86030"/><path d="M15 28h1v1h-1zM31 13h1v1h-1zM22 24h1v1h-1zM29 13h1v1h-1zM20 1h1v1h-1zM6 0h1v1h-1zM4 25h1v1h-1zM22 3h1v1h-1zM14 24h1v1h-1zM26 24h1v1h-1zM14 1h1v1h-1zM16 1h1v1h-1zM16 27h1v1h-1zM15 14h1v1h-1zM22 13h1v1h-1z" fill="#a8d0e8"/><path d="M20 27h1v1h-1zM17 19h1v1h-1zM31 13h1v1h-1zM10 30h1v1h-1zM17 8h1v1h-1zM19 18h1v1h-1zM5 21h1v1h-1zM0 31h1v1h-1z" fill="#e0c030"/></pattern>
<pattern id="pBB" width="32" height="32" patternUnits="userSpaceOnUse"><rect width="32" height="32" fill="#1a8ccf"/><path d="M15 10h1v1h-1zM20 28h1v1h-1zM13 3h1v1h-1zM13 23h1v1h-1zM2 28h1v1h-1zM11 27h1v1h-1zM8 19h1v1h-1zM1 7h1v1h-1zM9 0h1v1h-1zM8 19h1v1h-1zM9 22h1v1h-1zM6 10h1v1h-1zM29 25h1v1h-1zM5 26h1v1h-1zM21 25h1v1h-1zM21 2h1v1h-1zM15 12h1v1h-1zM0 2h1v1h-1zM8 14h1v1h-1zM27 6h1v1h-1zM1 3h1v1h-1zM20 4h1v1h-1zM7 7h1v1h-1zM31 8h1v1h-1zM27 0h1v1h-1zM11 14h1v1h-1zM9 7h1v1h-1zM22 31h1v1h-1zM4 22h1v1h-1zM13 14h1v1h-1zM4 17h1v1h-1zM11 0h1v1h-1zM16 17h1v1h-1zM4 2h1v1h-1zM12 3h1v1h-1zM26 23h1v1h-1zM17 0h1v1h-1zM20 2h1v1h-1zM29 18h1v1h-1zM21 26h1v1h-1zM17 25h1v1h-1zM27 20h1v1h-1zM26 24h1v1h-1zM9 24h1v1h-1zM24 26h1v1h-1zM9 0h1v1h-1zM15 16h1v1h-1zM24 15h1v1h-1zM12 7h1v1h-1zM5 2h1v1h-1zM3 25h1v1h-1zM20 28h1v1h-1zM20 29h1v1h-1zM0 30h1v1h-1zM30 21h1v1h-1zM24 15h1v1h-1zM24 22h1v1h-1zM4 25h1v1h-1zM17 20h1v1h-1zM4 14h1v1h-1zM16 16h1v1h-1zM30 22h1v1h-1zM30 14h1v1h-1zM9 4h1v1h-1zM23 13h1v1h-1zM10 23h1v1h-1zM15 11h1v1h-1zM9 29h1v1h-1zM11 2h1v1h-1zM20 24h1v1h-1zM23 27h1v1h-1zM7 26h1v1h-1zM9 16h1v1h-1zM24 6h1v1h-1zM23 22h1v1h-1zM19 28h1v1h-1zM5 17h1v1h-1zM25 18h1v1h-1zM28 7h1v1h-1zM28 30h1v1h-1zM11 9h1v1h-1zM0 8h1v1h-1zM23 31h1v1h-1zM15 23h1v1h-1zM21 24h1v1h-1zM16 1h1v1h-1zM12 0h1v1h-1zM16 3h1v1h-1zM11 19h1v1h-1zM17 20h1v1h-1zM16 15h1v1h-1zM16 28h1v1h-1zM5 31h1v1h-1zM5 12h1v1h-1zM8 27h1v1h-1zM18 23h1v1h-1zM2 28h1v1h-1zM24 23h1v1h-1zM2 18h1v1h-1zM26 27h1v1h-1zM16 22h1v1h-1zM15 24h1v1h-1zM8 12h1v1h-1zM23 4h1v1h-1zM13 21h1v1h-1zM4 5h1v1h-1zM28 24h1v1h-1zM25 26h1v1h-1zM31 1h1v1h-1zM6 29h1v1h-1zM29 27h1v1h-1zM26 30h1v1h-1zM11 4h1v1h-1zM28 25h1v1h-1zM31 8h1v1h-1zM0 14h1v1h-1zM12 25h1v1h-1zM2 18h1v1h-1zM21 24h1v1h-1zM29 7h1v1h-1zM5 14h1v1h-1zM4 0h1v1h-1zM6 31h1v1h-1zM5 13h1v1h-1zM29 3h1v1h-1zM12 21h1v1h-1zM30 3h1v1h-1zM26 8h1v1h-1zM26 3h1v1h-1zM9 20h1v1h-1zM21 12h1v1h-1zM0 11h1v1h-1zM17 16h1v1h-1zM5 20h1v1h-1zM24 16h1v1h-1zM19 25h1v1h-1zM26 3h1v1h-1zM19 19h1v1h-1zM15 24h1v1h-1zM27 16h1v1h-1zM19 12h1v1h-1zM8 3h1v1h-1zM13 23h1v1h-1zM29 31h1v1h-1zM9 23h1v1h-1zM21 12h1v1h-1zM29 3h1v1h-1zM20 0h1v1h-1zM4 26h1v1h-1zM20 2h1v1h-1zM17 14h1v1h-1zM28 18h1v1h-1zM12 13h1v1h-1zM29 25h1v1h-1zM28 13h1v1h-1zM13 3h1v1h-1zM11 27h1v1h-1zM7 3h1v1h-1zM8 4h1v1h-1zM31 11h1v1h-1zM0 10h1v1h-1zM31 14h1v1h-1zM18 13h1v1h-1zM10 9h1v1h-1zM13 6h1v1h-1zM29 6h1v1h-1zM12 5h1v1h-1zM3 26h1v1h-1zM14 16h1v1h-1zM28 27h1v1h-1zM9 3h1v1h-1zM8 2h1v1h-1zM10 28h1v1h-1zM18 14h1v1h-1zM20 9h1v1h-1zM19 16h1v1h-1zM20 13h1v1h-1zM9 14h1v1h-1zM25 2h1v1h-1zM20 24h1v1h-1zM9 18h1v1h-1zM14 5h1v1h-1zM12 29h1v1h-1zM9 11h1v1h-1zM27 21h1v1h-1zM25 7h1v1h-1zM2 22h1v1h-1zM7 13h1v1h-1zM4 18h1v1h-1zM31 22h1v1h-1zM1 31h1v1h-1zM5 12h1v1h-1zM31 17h1v1h-1zM19 5h1v1h-1zM12 8h1v1h-1zM30 17h1v1h-1zM14 19h1v1h-1zM2 6h1v1h-1zM0 22h1v1h-1zM12 9h1v1h-1zM19 3h1v1h-1zM11 21h1v1h-1zM22 28h1v1h-1zM30 15h1v1h-1zM21 23h1v1h-1zM11 7h1v1h-1zM19 4h1v1h-1zM29 6h1v1h-1zM7 10h1v1h-1zM25 29h1v1h-1zM2 2h1v1h-1zM2 6h1v1h-1zM26 8h1v1h-1zM26 22h1v1h-1zM4 23h1v1h-1zM10 23h1v1h-1zM10 5h1v1h-1zM21 0h1v1h-1zM30 19h1v1h-1zM9 16h1v1h-1zM6 6h1v1h-1zM15 7h1v1h-1zM9 31h1v1h-1zM17 7h1v1h-1zM20 29h1v1h-1zM15 10h1v1h-1zM2 16h1v1h-1zM23 12h1v1h-1zM18 25h1v1h-1zM13 8h1v1h-1zM15 15h1v1h-1zM6 0h1v1h-1zM6 3h1v1h-1zM31 13h1v1h-1zM14 5h1v1h-1zM10 9h1v1h-1zM16 1h1v1h-1zM27 25h1v1h-1zM7 18h1v1h-1zM7 5h1v1h-1zM13 14h1v1h-1zM15 3h1v1h-1zM15 4h1v1h-1zM21 6h1v1h-1zM2 13h1v1h-1zM11 19h1v1h-1zM21 5h1v1h-1zM29 11h1v1h-1zM0 20h1v1h-1zM26 26h1v1h-1zM2 5h1v1h-1zM15 9h1v1h-1zM10 9h1v1h-1zM22 8h1v1h-1zM13 12h1v1h-1zM14 21h1v1h-1z" fill="#22a0e0"/><path d="M4 0h1v1h-1zM30 2h1v1h-1zM31 21h1v1h-1zM4 4h1v1h-1zM12 3h1v1h-1zM23 26h1v1h-1zM5 22h1v1h-1zM10 31h1v1h-1zM31 8h1v1h-1zM16 19h1v1h-1zM3 29h1v1h-1zM10 27h1v1h-1zM24 19h1v1h-1zM7 4h1v1h-1zM16 14h1v1h-1zM15 12h1v1h-1zM29 15h1v1h-1zM31 3h1v1h-1zM25 25h1v1h-1zM21 24h1v1h-1zM25 5h1v1h-1zM14 21h1v1h-1zM27 19h1v1h-1zM0 19h1v1h-1zM31 1h1v1h-1zM7 30h1v1h-1zM26 26h1v1h-1zM19 29h1v1h-1zM9 21h1v1h-1zM13 5h1v1h-1zM22 25h1v1h-1zM29 2h1v1h-1zM18 21h1v1h-1zM5 17h1v1h-1zM11 28h1v1h-1zM26 15h1v1h-1zM7 13h1v1h-1zM2 24h1v1h-1zM11 24h1v1h-1zM17 21h1v1h-1zM9 23h1v1h-1zM10 14h1v1h-1zM22 25h1v1h-1zM19 31h1v1h-1zM20 12h1v1h-1zM10 25h1v1h-1zM0 0h1v1h-1zM11 6h1v1h-1zM15 29h1v1h-1zM16 22h1v1h-1zM6 24h1v1h-1zM8 16h1v1h-1zM26 4h1v1h-1zM21 28h1v1h-1zM17 18h1v1h-1zM23 19h1v1h-1zM24 3h1v1h-1zM31 31h1v1h-1zM23 1h1v1h-1zM3 7h1v1h-1zM24 28h1v1h-1zM19 9h1v1h-1zM29 2h1v1h-1zM20 30h1v1h-1zM8 0h1v1h-1zM17 9h1v1h-1zM12 2h1v1h-1zM25 11h1v1h-1zM17 15h1v1h-1zM18 1h1v1h-1zM26 26h1v1h-1zM5 24h1v1h-1zM31 23h1v1h-1zM17 20h1v1h-1zM10 31h1v1h-1zM3 22h1v1h-1zM8 12h1v1h-1zM3 10h1v1h-1zM19 10h1v1h-1zM19 3h1v1h-1zM19 24h1v1h-1zM23 11h1v1h-1zM17 19h1v1h-1zM30 12h1v1h-1zM20 28h1v1h-1zM25 6h1v1h-1zM16 23h1v1h-1zM25 20h1v1h-1zM24 30h1v1h-1zM17 7h1v1h-1zM13 28h1v1h-1zM26 10h1v1h-1zM20 2h1v1h-1zM9 17h1v1h-1zM30 26h1v1h-1zM4 17h1v1h-1zM25 23h1v1h-1zM25 18h1v1h-1zM7 16h1v1h-1zM28 0h1v1h-1zM2 19h1v1h-1zM22 23h1v1h-1zM16 15h1v1h-1zM4 6h1v1h-1zM26 7h1v1h-1zM19 10h1v1h-1zM11 7h1v1h-1zM25 25h1v1h-1zM21 25h1v1h-1zM25 31h1v1h-1zM21 22h1v1h-1zM11 9h1v1h-1zM26 18h1v1h-1zM8 13h1v1h-1zM21 4h1v1h-1zM26 4h1v1h-1zM0 15h1v1h-1zM27 25h1v1h-1zM13 17h1v1h-1zM8 9h1v1h-1zM14 15h1v1h-1zM7 18h1v1h-1zM2 24h1v1h-1zM18 8h1v1h-1zM24 17h1v1h-1zM4 17h1v1h-1zM13 14h1v1h-1zM19 6h1v1h-1zM23 5h1v1h-1zM23 1h1v1h-1zM4 7h1v1h-1zM20 13h1v1h-1zM0 29h1v1h-1zM8 28h1v1h-1zM17 3h1v1h-1zM28 2h1v1h-1zM2 29h1v1h-1zM7 30h1v1h-1zM14 18h1v1h-1zM21 21h1v1h-1zM14 13h1v1h-1zM13 18h1v1h-1zM1 14h1v1h-1zM11 1h1v1h-1zM17 27h1v1h-1zM23 4h1v1h-1zM17 5h1v1h-1zM7 25h1v1h-1zM24 26h1v1h-1zM14 3h1v1h-1zM23 21h1v1h-1zM16 4h1v1h-1zM30 8h1v1h-1zM27 29h1v1h-1zM29 12h1v1h-1zM21 12h1v1h-1zM7 25h1v1h-1zM10 18h1v1h-1zM12 4h1v1h-1zM1 28h1v1h-1zM12 12h1v1h-1zM16 12h1v1h-1zM18 1h1v1h-1zM1 4h1v1h-1zM22 13h1v1h-1zM26 0h1v1h-1zM16 22h1v1h-1zM10 20h1v1h-1zM22 19h1v1h-1zM6 2h1v1h-1zM11 22h1v1h-1zM26 1h1v1h-1zM29 6h1v1h-1zM21 6h1v1h-1zM9 23h1v1h-1zM30 31h1v1h-1zM5 21h1v1h-1zM20 30h1v1h-1zM8 6h1v1h-1zM16 24h1v1h-1zM13 22h1v1h-1zM16 1h1v1h-1zM12 17h1v1h-1zM27 24h1v1h-1zM10 27h1v1h-1zM8 8h1v1h-1zM0 7h1v1h-1zM13 24h1v1h-1zM1 0h1v1h-1zM5 29h1v1h-1zM2 13h1v1h-1zM4 20h1v1h-1zM21 29h1v1h-1zM31 13h1v1h-1zM0 15h1v1h-1zM13 22h1v1h-1zM24 6h1v1h-1zM6 8h1v1h-1zM12 28h1v1h-1zM29 28h1v1h-1zM4 3h1v1h-1zM30 10h1v1h-1zM25 15h1v1h-1zM30 30h1v1h-1z" fill="#1680c4"/></pattern>
<pattern id="pLB" width="32" height="32" patternUnits="userSpaceOnUse"><rect width="32" height="32" fill="#b2dcee"/><path d="M9 7h1v1h-1zM31 24h1v1h-1zM4 15h1v1h-1zM14 0h1v1h-1zM25 14h1v1h-1zM2 15h1v1h-1zM6 12h1v1h-1zM0 2h1v1h-1zM29 3h1v1h-1zM25 15h1v1h-1zM14 2h1v1h-1zM26 16h1v1h-1zM2 9h1v1h-1zM29 1h1v1h-1zM30 6h1v1h-1zM6 11h1v1h-1zM9 10h1v1h-1zM20 6h1v1h-1zM24 0h1v1h-1zM4 1h1v1h-1zM5 4h1v1h-1zM3 18h1v1h-1zM29 25h1v1h-1zM0 13h1v1h-1zM1 11h1v1h-1zM29 13h1v1h-1zM7 13h1v1h-1zM27 7h1v1h-1zM5 22h1v1h-1zM6 5h1v1h-1zM15 6h1v1h-1zM5 23h1v1h-1zM17 19h1v1h-1zM19 18h1v1h-1zM9 31h1v1h-1zM21 12h1v1h-1zM0 5h1v1h-1zM4 2h1v1h-1zM7 13h1v1h-1zM24 29h1v1h-1zM26 13h1v1h-1zM5 1h1v1h-1zM3 1h1v1h-1zM8 27h1v1h-1zM3 11h1v1h-1zM18 28h1v1h-1zM16 8h1v1h-1zM16 19h1v1h-1zM22 1h1v1h-1zM20 24h1v1h-1zM6 10h1v1h-1zM28 10h1v1h-1zM30 20h1v1h-1zM17 15h1v1h-1zM0 26h1v1h-1zM1 21h1v1h-1zM14 22h1v1h-1zM21 0h1v1h-1zM15 21h1v1h-1zM5 10h1v1h-1zM6 2h1v1h-1zM20 27h1v1h-1zM21 23h1v1h-1zM4 7h1v1h-1zM29 10h1v1h-1zM13 3h1v1h-1zM15 26h1v1h-1zM5 13h1v1h-1zM13 18h1v1h-1zM0 16h1v1h-1zM27 7h1v1h-1zM11 28h1v1h-1zM10 18h1v1h-1zM25 15h1v1h-1zM21 16h1v1h-1zM1 5h1v1h-1zM13 16h1v1h-1zM9 4h1v1h-1zM4 25h1v1h-1zM19 4h1v1h-1zM4 4h1v1h-1zM0 4h1v1h-1zM23 4h1v1h-1zM9 7h1v1h-1zM31 17h1v1h-1zM28 11h1v1h-1zM6 16h1v1h-1zM19 25h1v1h-1zM26 11h1v1h-1zM28 6h1v1h-1zM29 21h1v1h-1zM20 13h1v1h-1zM1 24h1v1h-1zM14 6h1v1h-1zM13 22h1v1h-1zM21 17h1v1h-1zM0 12h1v1h-1zM4 5h1v1h-1zM10 19h1v1h-1zM16 11h1v1h-1zM2 9h1v1h-1zM30 6h1v1h-1zM3 24h1v1h-1zM16 5h1v1h-1zM14 3h1v1h-1zM4 18h1v1h-1zM0 17h1v1h-1zM8 22h1v1h-1zM23 11h1v1h-1zM8 23h1v1h-1zM16 23h1v1h-1zM23 10h1v1h-1zM7 15h1v1h-1zM10 18h1v1h-1zM24 1h1v1h-1zM14 12h1v1h-1zM14 24h1v1h-1zM23 15h1v1h-1zM30 16h1v1h-1zM0 3h1v1h-1zM6 24h1v1h-1zM23 15h1v1h-1zM18 1h1v1h-1zM30 28h1v1h-1zM31 7h1v1h-1zM7 29h1v1h-1zM31 5h1v1h-1zM25 7h1v1h-1zM31 30h1v1h-1zM11 14h1v1h-1zM27 28h1v1h-1zM3 7h1v1h-1zM12 4h1v1h-1zM17 23h1v1h-1zM28 30h1v1h-1zM15 21h1v1h-1zM3 4h1v1h-1zM14 30h1v1h-1zM13 24h1v1h-1zM7 3h1v1h-1zM27 3h1v1h-1zM15 10h1v1h-1zM20 13h1v1h-1zM6 5h1v1h-1zM30 16h1v1h-1zM29 29h1v1h-1zM8 4h1v1h-1zM28 20h1v1h-1zM6 13h1v1h-1zM17 23h1v1h-1zM4 7h1v1h-1zM30 30h1v1h-1zM16 11h1v1h-1zM0 1h1v1h-1zM30 2h1v1h-1zM14 31h1v1h-1zM8 23h1v1h-1zM9 24h1v1h-1zM20 2h1v1h-1zM23 11h1v1h-1zM14 1h1v1h-1zM29 5h1v1h-1zM28 13h1v1h-1zM2 18h1v1h-1zM28 8h1v1h-1zM12 19h1v1h-1zM20 12h1v1h-1zM4 25h1v1h-1zM1 10h1v1h-1zM0 23h1v1h-1zM30 14h1v1h-1zM4 30h1v1h-1zM23 31h1v1h-1zM13 13h1v1h-1zM12 30h1v1h-1zM12 19h1v1h-1zM29 17h1v1h-1zM14 20h1v1h-1zM2 26h1v1h-1zM11 21h1v1h-1zM26 1h1v1h-1zM23 10h1v1h-1zM15 0h1v1h-1zM9 16h1v1h-1zM29 30h1v1h-1zM24 8h1v1h-1zM16 15h1v1h-1zM7 17h1v1h-1zM26 9h1v1h-1zM8 8h1v1h-1zM20 3h1v1h-1zM10 14h1v1h-1zM27 10h1v1h-1zM5 28h1v1h-1zM26 16h1v1h-1zM14 9h1v1h-1zM17 26h1v1h-1zM6 3h1v1h-1zM27 6h1v1h-1zM1 18h1v1h-1zM4 18h1v1h-1zM11 8h1v1h-1zM26 4h1v1h-1zM24 19h1v1h-1z" fill="#c8e8f6"/><path d="M7 28h1v1h-1zM15 31h1v1h-1zM23 12h1v1h-1zM27 4h1v1h-1zM16 24h1v1h-1zM11 16h1v1h-1zM15 26h1v1h-1zM23 16h1v1h-1zM4 3h1v1h-1zM30 13h1v1h-1zM20 0h1v1h-1zM28 30h1v1h-1zM21 11h1v1h-1zM29 20h1v1h-1zM14 27h1v1h-1zM5 13h1v1h-1zM26 25h1v1h-1zM8 14h1v1h-1zM23 23h1v1h-1zM24 31h1v1h-1zM23 8h1v1h-1zM14 13h1v1h-1zM17 7h1v1h-1zM2 8h1v1h-1zM25 26h1v1h-1zM4 30h1v1h-1zM29 21h1v1h-1zM22 22h1v1h-1zM27 20h1v1h-1zM11 30h1v1h-1zM1 10h1v1h-1zM25 23h1v1h-1zM7 18h1v1h-1zM13 15h1v1h-1zM12 23h1v1h-1zM19 16h1v1h-1zM10 4h1v1h-1zM29 2h1v1h-1zM12 0h1v1h-1zM26 17h1v1h-1zM1 4h1v1h-1zM0 11h1v1h-1zM5 15h1v1h-1zM0 11h1v1h-1zM14 11h1v1h-1zM16 15h1v1h-1zM1 1h1v1h-1zM7 5h1v1h-1zM5 12h1v1h-1zM9 30h1v1h-1zM21 4h1v1h-1zM22 20h1v1h-1zM18 26h1v1h-1zM30 16h1v1h-1zM21 3h1v1h-1zM5 16h1v1h-1zM10 16h1v1h-1zM5 4h1v1h-1zM3 16h1v1h-1zM8 21h1v1h-1zM21 31h1v1h-1zM9 12h1v1h-1zM3 9h1v1h-1zM27 24h1v1h-1zM18 1h1v1h-1zM14 19h1v1h-1zM4 30h1v1h-1zM6 4h1v1h-1zM9 12h1v1h-1zM28 29h1v1h-1zM14 5h1v1h-1zM30 27h1v1h-1zM8 0h1v1h-1zM12 13h1v1h-1zM6 29h1v1h-1zM15 16h1v1h-1zM27 21h1v1h-1zM3 1h1v1h-1zM14 1h1v1h-1zM14 18h1v1h-1zM13 29h1v1h-1zM12 11h1v1h-1zM13 19h1v1h-1zM16 8h1v1h-1zM10 3h1v1h-1zM14 29h1v1h-1zM21 19h1v1h-1zM25 20h1v1h-1zM19 3h1v1h-1zM20 5h1v1h-1zM18 3h1v1h-1zM20 15h1v1h-1zM9 11h1v1h-1zM15 29h1v1h-1zM1 12h1v1h-1zM20 7h1v1h-1zM23 30h1v1h-1zM19 4h1v1h-1zM6 4h1v1h-1zM24 27h1v1h-1zM30 4h1v1h-1zM16 14h1v1h-1zM28 20h1v1h-1zM30 26h1v1h-1zM23 28h1v1h-1zM20 3h1v1h-1zM6 29h1v1h-1zM5 17h1v1h-1zM8 2h1v1h-1zM8 4h1v1h-1zM29 2h1v1h-1zM19 4h1v1h-1zM21 27h1v1h-1zM5 9h1v1h-1zM25 6h1v1h-1zM3 2h1v1h-1zM18 8h1v1h-1zM6 4h1v1h-1zM20 10h1v1h-1zM26 10h1v1h-1zM15 11h1v1h-1zM24 27h1v1h-1zM21 23h1v1h-1zM7 15h1v1h-1zM29 7h1v1h-1zM5 16h1v1h-1zM24 30h1v1h-1zM14 11h1v1h-1zM18 29h1v1h-1zM25 12h1v1h-1zM8 12h1v1h-1zM31 6h1v1h-1zM21 15h1v1h-1zM1 16h1v1h-1zM30 9h1v1h-1zM20 20h1v1h-1zM11 21h1v1h-1zM12 26h1v1h-1zM3 0h1v1h-1zM14 22h1v1h-1zM0 16h1v1h-1zM2 2h1v1h-1zM20 14h1v1h-1zM20 17h1v1h-1zM23 19h1v1h-1zM23 22h1v1h-1zM25 24h1v1h-1zM18 7h1v1h-1zM14 0h1v1h-1zM26 15h1v1h-1zM3 10h1v1h-1zM9 19h1v1h-1zM16 20h1v1h-1z" fill="#a6d4e8"/></pattern>
<pattern id="pCR" width="6" height="6" patternUnits="userSpaceOnUse"><rect width="6" height="6" fill="#f1f4ea"/><path d="M2 0h1v6h-1zM5 0h1v6h-1z" fill="#ebefe3"/><path d="M0 2h6v1h-6z" fill="#ecf0e4"/><path d="M0 0h2v2h-2zM3 3h2v2h-2z" fill="#f8fbf4"/></pattern>
<pattern id="pO" width="7" height="7" patternUnits="userSpaceOnUse"><rect width="7" height="7" fill="#f07a10"/><rect x="0" y="0" width="1" height="7" fill="#c82a0e"/><rect x="3" y="0" width="1" height="7" fill="#d0360e"/><rect x="0" y="2" width="7" height="1" fill="#cc300e"/><rect x="0" y="5" width="7" height="1" fill="#dc4612"/><rect x="5" y="3" width="1" height="1" fill="#e05a14"/></pattern>
<pattern id="pC" width="16" height="16" patternUnits="userSpaceOnUse"><rect width="16" height="16" fill="#14bce8"/><path d="M1 1h1v1h-1zM3 1h1v1h-1zM5 5h1v1h-1zM9 5h1v1h-1zM11 5h1v1h-1zM11 9h1v1h-1zM1 11h1v1h-1zM5 11h1v1h-1zM9 11h1v1h-1zM11 11h1v1h-1zM5 13h1v1h-1zM11 15h1v1h-1zM13 15h1v1h-1zM15 15h1v1h-1z" fill="#e06a20"/><path d="M5 1h1v1h-1zM13 1h1v1h-1zM3 3h1v1h-1zM7 3h1v1h-1zM7 5h1v1h-1zM15 5h1v1h-1zM1 7h1v1h-1zM11 7h1v1h-1zM3 9h1v1h-1zM7 11h1v1h-1zM13 11h1v1h-1zM7 13h1v1h-1zM9 13h1v1h-1zM11 13h1v1h-1zM13 13h1v1h-1zM6 1h1v1h-1zM6 2h1v1h-1zM6 3h1v1h-1zM6 11h1v1h-1zM6 14h1v1h-1zM12 2h1v1h-1zM12 4h1v1h-1zM12 7h1v1h-1zM12 11h1v1h-1zM12 15h1v1h-1zM6 8h1v1h-1zM10 8h1v1h-1z" fill="#6a8a30"/><path d="M7 1h1v1h-1zM9 1h1v1h-1zM5 3h1v1h-1zM9 3h1v1h-1zM13 5h1v1h-1zM3 7h1v1h-1zM1 9h1v1h-1zM15 9h1v1h-1zM6 0h1v1h-1zM6 6h1v1h-1zM6 7h1v1h-1zM6 10h1v1h-1zM6 13h1v1h-1zM12 1h1v1h-1zM12 3h1v1h-1zM12 9h1v1h-1z" fill="#2a3aa0"/><path d="M11 1h1v1h-1zM13 3h1v1h-1zM3 5h1v1h-1zM7 15h1v1h-1z" fill="#e8c828"/><path d="M1 3h1v1h-1zM1 5h1v1h-1zM5 7h1v1h-1zM7 7h1v1h-1zM9 7h1v1h-1zM13 7h1v1h-1zM15 7h1v1h-1zM5 9h1v1h-1zM9 9h1v1h-1zM13 9h1v1h-1zM1 15h1v1h-1zM9 15h1v1h-1zM6 4h1v1h-1zM6 5h1v1h-1zM6 15h1v1h-1zM12 0h1v1h-1zM12 5h1v1h-1zM12 12h1v1h-1zM12 13h1v1h-1zM12 14h1v1h-1z" fill="#7a3aa8"/><path d="M6 8h1v1h-1zM6 9h1v1h-1zM6 12h1v1h-1zM12 6h1v1h-1zM12 8h1v1h-1zM12 10h1v1h-1z" fill="#3a7ab8"/><path d="M0 8h1v1h-1zM14 8h1v1h-1z" fill="#3a5a98"/><path d="M2 8h1v1h-1zM4 8h1v1h-1zM8 8h1v1h-1zM12 8h1v1h-1z" fill="#b07030"/></pattern>
</defs>
<rect x="0" y="37" width="703" height="587" fill="#fdf9ef"/>
<rect x="24" y="62" width="679" height="543" fill="#fff"/>
<rect x="23" y="37" width="1" height="587" fill="#000"/>
<rect x="24" y="61" width="679" height="1" fill="#000"/>
<rect x="36" y="37" width="2" height="24" fill="#000"/>
<text x="57.0" y="47.3" class="rl" text-anchor="end">0</text>
<text x="94.0" y="47.3" class="rl" text-anchor="end">8</text>
<text x="131.0" y="47.3" class="rl" text-anchor="end">16</text>
<text x="167.0" y="47.3" class="rl" text-anchor="end">24</text>
<text x="204.0" y="47.3" class="rl" text-anchor="end">32</text>
<text x="240.0" y="47.3" class="rl" text-anchor="end">40</text>
<text x="277.0" y="47.3" class="rl" text-anchor="end">48</text>
<text x="314.0" y="47.3" class="rl" text-anchor="end">56</text>
<text x="350.0" y="47.3" class="rl" text-anchor="end">64</text>
<text x="387.0" y="47.3" class="rl" text-anchor="end">72</text>
<text x="423.0" y="47.3" class="rl" text-anchor="end">80</text>
<text x="460.0" y="47.3" class="rl" text-anchor="end">88</text>
<text x="497.0" y="47.3" class="rl" text-anchor="end">96</text>
<text x="533.0" y="47.3" class="rl" text-anchor="end">104</text>
<text x="570.0" y="47.3" class="rl" text-anchor="end">112</text>
<text x="607.0" y="47.3" class="rl" text-anchor="end">120</text>
<text x="643.0" y="47.3" class="rl" text-anchor="end">128</text>
<text x="680.0" y="47.3" class="rl" text-anchor="end">136</text>
<text x="716.0" y="47.3" class="rl" text-anchor="end">144</text>
<path d="M32.5 43V61M36.5 43V61M41.5 43V61M45.5 43V61M50.5 43V61M54.5 50V61M59.5 43V61M64.5 43V61M68.5 43V61M73.5 43V61M77.5 43V61M82.5 43V61M86.5 43V61M91.5 50V61M96.5 43V61M100.5 43V61M105.5 43V61M109.5 43V61M114.5 43V61M118.5 50V61M123.5 50V61M128.5 50V61M132.5 43V61M137.5 43V61M141.5 43V61M146.5 43V61M150.5 43V61M155.5 50V61M160.5 50V61M164.5 50V61M169.5 43V61M173.5 43V61M178.5 43V61M183.5 43V61M187.5 43V61M192.5 50V61M196.5 50V61M201.5 50V61M205.5 43V61M210.5 43V61M215.5 43V61M219.5 43V61M224.5 43V61M228.5 50V61M233.5 50V61M237.5 50V61M242.5 43V61M247.5 43V61M251.5 43V61M256.5 43V61M260.5 43V61M265.5 50V61M269.5 50V61M274.5 50V61M279.5 43V61M283.5 43V61M288.5 43V61M292.5 43V61M297.5 43V61M302.5 50V61M306.5 50V61M311.5 50V61M315.5 43V61M320.5 43V61M324.5 43V61M329.5 43V61M334.5 43V61M338.5 50V61M343.5 50V61M347.5 50V61M352.5 43V61M356.5 43V61M361.5 43V61M366.5 43V61M370.5 43V61M375.5 50V61M379.5 50V61M384.5 50V61M388.5 43V61M393.5 43V61M398.5 43V61M402.5 43V61M407.5 43V61M411.5 50V61M416.5 50V61M420.5 50V61M425.5 43V61M430.5 43V61M434.5 43V61M439.5 43V61M443.5 43V61M448.5 50V61M453.5 50V61M457.5 50V61M462.5 43V61M466.5 43V61M471.5 43V61M475.5 43V61M480.5 43V61M485.5 50V61M489.5 50V61M494.5 50V61M498.5 43V61M503.5 43V61M507.5 43V61M512.5 43V61M517.5 50V61M521.5 50V61M526.5 50V61M530.5 50V61M535.5 43V61M539.5 43V61M544.5 43V61M549.5 43V61M553.5 43V61M558.5 50V61M562.5 50V61M567.5 50V61M571.5 43V61M576.5 43V61M581.5 43V61M585.5 43V61M590.5 50V61M594.5 50V61M599.5 50V61M604.5 50V61M608.5 43V61M613.5 43V61M617.5 43V61M622.5 43V61M626.5 43V61M631.5 50V61M636.5 50V61M640.5 50V61M645.5 43V61M649.5 43V61M654.5 43V61M658.5 43V61M663.5 50V61M668.5 50V61M672.5 50V61M677.5 50V61M681.5 43V61M686.5 43V61M690.5 43V61M695.5 43V61M700.5 50V61" stroke="#000" stroke-width="1" fill="none"/>
<path d="M5 67.5H23M5 72.5H23M5 76.5H23M5 81.5H23M5 85.5H23M7 90.5H23M7 94.5H23M7 99.5H23M5 104.5H23M5 108.5H23M5 113.5H23M5 117.5H23M5 122.5H23M12 127.5H23M12 131.5H23M12 136.5H23M5 140.5H23M5 145.5H23M5 149.5H23M5 154.5H23M5 159.5H23M12 163.5H23M12 168.5H23M12 172.5H23M5 177.5H23M5 181.5H23M5 186.5H23M5 191.5H23M5 195.5H23M12 200.5H23M12 204.5H23M12 209.5H23M5 214.5H23M5 218.5H23M5 223.5H23M5 227.5H23M5 232.5H23M12 236.5H23M12 241.5H23M12 246.5H23M5 250.5H23M5 255.5H23M5 259.5H23M5 264.5H23M5 268.5H23M12 273.5H23M12 278.5H23M12 282.5H23M5 287.5H23M5 291.5H23M5 296.5H23M5 301.5H23M5 305.5H23M12 310.5H23M12 314.5H23M12 319.5H23M5 323.5H23M5 328.5H23M5 333.5H23M5 337.5H23M5 342.5H23M12 346.5H23M12 351.5H23M12 356.5H23M5 360.5H23M5 365.5H23M5 369.5H23M5 374.5H23M5 378.5H23M12 383.5H23M12 388.5H23M12 392.5H23M5 397.5H23M5 401.5H23M5 406.5H23M5 410.5H23M5 415.5H23M12 420.5H23M12 424.5H23M12 429.5H23M5 433.5H23M5 438.5H23M5 443.5H23M5 447.5H23M5 452.5H23M12 456.5H23M12 461.5H23M12 465.5H23M5 470.5H23M5 475.5H23M5 479.5H23M5 484.5H23M5 488.5H23M12 493.5H23M12 497.5H23M12 502.5H23M5 507.5H23M5 511.5H23M5 516.5H23M5 520.5H23M5 525.5H23M17 530.5H23M17 534.5H23M17 539.5H23M5 543.5H23M5 548.5H23M5 552.5H23M5 557.5H23M5 562.5H23M17 566.5H23M17 571.5H23M17 575.5H23M5 580.5H23M5 585.5H23M5 589.5H23M5 594.5H23M5 598.5H23M17 603.5H23M17 607.5H23M17 612.5H23M5 617.5H23" stroke="#000" stroke-width="1" fill="none"/>
<text x="0.5" y="61.5" class="rl">0</text>
<text x="0.5" y="97.9" class="rl">8</text>
<text x="0.5" y="134.9" class="rl">16</text>
<text x="0.5" y="171.9" class="rl">24</text>
<text x="0.5" y="207.9" class="rl">32</text>
<text x="0.5" y="244.9" class="rl">40</text>
<text x="0.5" y="281.9" class="rl">48</text>
<text x="0.5" y="317.9" class="rl">56</text>
<text x="0.5" y="354.9" class="rl">64</text>
<text x="0.5" y="391.9" class="rl">72</text>
<text x="0.5" y="427.9" class="rl">80</text>
<text x="0.5" y="464.9" class="rl">88</text>
<text x="0.5" y="500.9" class="rl">96</text>
<text x="0.5" y="537.9" class="rl">104</text>
<text x="0.5" y="574.9" class="rl">112</text>
<text x="0.5" y="610.9" class="rl">120</text>
<rect x="93.5" y="67.5" width="16.0" height="34.0" fill="url(#pR)"/>
<rect x="93.5" y="566.5" width="16.0" height="34.0" fill="url(#pC)"/>
<rect x="109.5" y="67.5" width="16.0" height="34.0" fill="url(#pB)"/>
<rect x="109.5" y="566.5" width="16.0" height="34.0" fill="url(#pN)"/>
<rect x="125.5" y="67.5" width="16.0" height="34.0" fill="url(#pO)"/>
<rect x="125.5" y="566.5" width="16.0" height="34.0" fill="url(#pO)"/>
<rect x="141.5" y="67.5" width="16.0" height="34.0" fill="url(#pN)"/>
<rect x="141.5" y="566.5" width="16.0" height="34.0" fill="url(#pB)"/>
<rect x="157.5" y="67.5" width="16.0" height="34.0" fill="url(#pC)"/>
<rect x="157.5" y="566.5" width="16.0" height="34.0" fill="url(#pR)"/>
<rect x="173.5" y="67.5" width="16.0" height="34.0" fill="url(#pR)"/>
<rect x="173.5" y="566.5" width="16.0" height="34.0" fill="url(#pC)"/>
<rect x="189.5" y="67.5" width="16.0" height="34.0" fill="url(#pB)"/>
<rect x="189.5" y="566.5" width="16.0" height="34.0" fill="url(#pN)"/>
<rect x="205.5" y="67.5" width="16.0" height="34.0" fill="url(#pO)"/>
<rect x="205.5" y="566.5" width="16.0" height="34.0" fill="url(#pO)"/>
<rect x="221.5" y="67.5" width="16.0" height="34.0" fill="url(#pN)"/>
<rect x="221.5" y="566.5" width="16.0" height="34.0" fill="url(#pB)"/>
<rect x="237.5" y="67.5" width="16.0" height="34.0" fill="url(#pC)"/>
<rect x="237.5" y="566.5" width="16.0" height="34.0" fill="url(#pR)"/>
<rect x="253.5" y="67.5" width="16.0" height="34.0" fill="url(#pR)"/>
<rect x="253.5" y="566.5" width="16.0" height="34.0" fill="url(#pC)"/>
<rect x="269.5" y="67.5" width="17.0" height="34.0" fill="url(#pB)"/>
<rect x="269.5" y="566.5" width="17.0" height="34.0" fill="url(#pN)"/>
<rect x="286.5" y="67.5" width="16.0" height="34.0" fill="url(#pO)"/>
<rect x="286.5" y="566.5" width="16.0" height="34.0" fill="url(#pO)"/>
<rect x="302.5" y="67.5" width="16.0" height="34.0" fill="url(#pN)"/>
<rect x="302.5" y="566.5" width="16.0" height="34.0" fill="url(#pB)"/>
<rect x="318.5" y="67.5" width="16.0" height="34.0" fill="url(#pC)"/>
<rect x="318.5" y="566.5" width="16.0" height="34.0" fill="url(#pR)"/>
<rect x="334.5" y="67.5" width="16.0" height="34.0" fill="url(#pR)"/>
<rect x="334.5" y="566.5" width="16.0" height="34.0" fill="url(#pC)"/>
<rect x="350.5" y="67.5" width="16.0" height="34.0" fill="url(#pB)"/>
<rect x="350.5" y="566.5" width="16.0" height="34.0" fill="url(#pN)"/>
<rect x="366.5" y="67.5" width="16.0" height="34.0" fill="url(#pO)"/>
<rect x="366.5" y="566.5" width="16.0" height="34.0" fill="url(#pO)"/>
<rect x="382.5" y="67.5" width="16.0" height="34.0" fill="url(#pN)"/>
<rect x="382.5" y="566.5" width="16.0" height="34.0" fill="url(#pB)"/>
<rect x="398.5" y="67.5" width="16.0" height="34.0" fill="url(#pC)"/>
<rect x="398.5" y="566.5" width="16.0" height="34.0" fill="url(#pR)"/>
<rect x="414.5" y="67.5" width="16.0" height="34.0" fill="url(#pR)"/>
<rect x="414.5" y="566.5" width="16.0" height="34.0" fill="url(#pC)"/>
<rect x="430.5" y="67.5" width="16.0" height="34.0" fill="url(#pB)"/>
<rect x="430.5" y="566.5" width="16.0" height="34.0" fill="url(#pN)"/>
<rect x="446.5" y="67.5" width="16.0" height="34.0" fill="url(#pO)"/>
<rect x="446.5" y="566.5" width="16.0" height="34.0" fill="url(#pO)"/>
<rect x="59.5" y="101.5" width="34.0" height="16.0" fill="url(#pN)"/>
<rect x="462.5" y="101.5" width="34.0" height="16.0" fill="url(#pN)"/>
<rect x="59.5" y="117.5" width="34.0" height="16.0" fill="url(#pO)"/>
<rect x="462.5" y="117.5" width="34.0" height="16.0" fill="url(#pC)"/>
<rect x="59.5" y="133.5" width="34.0" height="16.0" fill="url(#pB)"/>
<rect x="462.5" y="133.5" width="34.0" height="16.0" fill="url(#pR)"/>
<rect x="59.5" y="149.5" width="34.0" height="16.0" fill="url(#pR)"/>
<rect x="462.5" y="149.5" width="34.0" height="16.0" fill="url(#pB)"/>
<rect x="59.5" y="165.5" width="34.0" height="16.0" fill="url(#pC)"/>
<rect x="462.5" y="165.5" width="34.0" height="16.0" fill="url(#pO)"/>
<rect x="59.5" y="181.5" width="34.0" height="16.0" fill="url(#pN)"/>
<rect x="462.5" y="181.5" width="34.0" height="16.0" fill="url(#pN)"/>
<rect x="59.5" y="197.5" width="34.0" height="16.0" fill="url(#pO)"/>
<rect x="462.5" y="197.5" width="34.0" height="16.0" fill="url(#pC)"/>
<rect x="59.5" y="213.5" width="34.0" height="16.0" fill="url(#pB)"/>
<rect x="462.5" y="213.5" width="34.0" height="16.0" fill="url(#pR)"/>
<rect x="59.5" y="229.5" width="34.0" height="16.0" fill="url(#pR)"/>
<rect x="462.5" y="229.5" width="34.0" height="16.0" fill="url(#pB)"/>
<rect x="59.5" y="245.5" width="34.0" height="16.0" fill="url(#pC)"/>
<rect x="462.5" y="245.5" width="34.0" height="16.0" fill="url(#pO)"/>
<rect x="59.5" y="261.5" width="34.0" height="16.0" fill="url(#pN)"/>
<rect x="462.5" y="261.5" width="34.0" height="16.0" fill="url(#pN)"/>
<rect x="59.5" y="277.5" width="34.0" height="16.0" fill="url(#pO)"/>
<rect x="462.5" y="277.5" width="34.0" height="16.0" fill="url(#pC)"/>
<rect x="59.5" y="293.5" width="34.0" height="16.0" fill="url(#pB)"/>
<rect x="462.5" y="293.5" width="34.0" height="16.0" fill="url(#pR)"/>
<rect x="59.5" y="309.5" width="34.0" height="17.0" fill="url(#pR)"/>
<rect x="462.5" y="309.5" width="34.0" height="17.0" fill="url(#pB)"/>
<rect x="59.5" y="326.5" width="34.0" height="16.0" fill="url(#pC)"/>
<rect x="462.5" y="326.5" width="34.0" height="16.0" fill="url(#pO)"/>
<rect x="59.5" y="342.5" width="34.0" height="16.0" fill="url(#pN)"/>
<rect x="462.5" y="342.5" width="34.0" height="16.0" fill="url(#pN)"/>
<rect x="59.5" y="358.5" width="34.0" height="16.0" fill="url(#pO)"/>
<rect x="462.5" y="358.5" width="34.0" height="16.0" fill="url(#pC)"/>
<rect x="59.5" y="374.5" width="34.0" height="16.0" fill="url(#pB)"/>
<rect x="462.5" y="374.5" width="34.0" height="16.0" fill="url(#pR)"/>
<rect x="59.5" y="390.5" width="34.0" height="16.0" fill="url(#pR)"/>
<rect x="462.5" y="390.5" width="34.0" height="16.0" fill="url(#pB)"/>
<rect x="59.5" y="406.5" width="34.0" height="16.0" fill="url(#pC)"/>
<rect x="462.5" y="406.5" width="34.0" height="16.0" fill="url(#pO)"/>
<rect x="59.5" y="422.5" width="34.0" height="16.0" fill="url(#pN)"/>
<rect x="462.5" y="422.5" width="34.0" height="16.0" fill="url(#pN)"/>
<rect x="59.5" y="438.5" width="34.0" height="16.0" fill="url(#pO)"/>
<rect x="462.5" y="438.5" width="34.0" height="16.0" fill="url(#pC)"/>
<rect x="59.5" y="454.5" width="34.0" height="16.0" fill="url(#pB)"/>
<rect x="462.5" y="454.5" width="34.0" height="16.0" fill="url(#pR)"/>
<rect x="59.5" y="470.5" width="34.0" height="16.0" fill="url(#pR)"/>
<rect x="462.5" y="470.5" width="34.0" height="16.0" fill="url(#pB)"/>
<rect x="59.5" y="486.5" width="34.0" height="16.0" fill="url(#pC)"/>
<rect x="462.5" y="486.5" width="34.0" height="16.0" fill="url(#pO)"/>
<rect x="59.5" y="502.5" width="34.0" height="16.0" fill="url(#pN)"/>
<rect x="462.5" y="502.5" width="34.0" height="16.0" fill="url(#pN)"/>
<rect x="59.5" y="518.5" width="34.0" height="16.0" fill="url(#pO)"/>
<rect x="462.5" y="518.5" width="34.0" height="16.0" fill="url(#pC)"/>
<rect x="59.5" y="534.5" width="34.0" height="16.0" fill="url(#pB)"/>
<rect x="462.5" y="534.5" width="34.0" height="16.0" fill="url(#pR)"/>
<rect x="59.5" y="550.5" width="34.0" height="16.0" fill="url(#pR)"/>
<rect x="462.5" y="550.5" width="34.0" height="16.0" fill="url(#pB)"/>
<polygon points="93.50,101.50 93.50,67.50 83.43,67.50" fill="url(#pN)"/>
<polygon points="93.50,101.50 83.43,67.50 71.00,67.50" fill="url(#pO)"/>
<polygon points="93.50,101.50 71.00,67.50 59.50,67.50 59.50,79.00" fill="url(#pB)"/>
<polygon points="93.50,101.50 59.50,79.00 59.50,91.43" fill="url(#pR)"/>
<polygon points="93.50,101.50 59.50,91.43 59.50,101.50" fill="url(#pC)"/>
<polygon points="462.50,101.50 462.50,67.50 472.57,67.50" fill="url(#pN)"/>
<polygon points="462.50,101.50 472.57,67.50 485.00,67.50" fill="url(#pC)"/>
<polygon points="462.50,101.50 485.00,67.50 496.50,67.50 496.50,79.00" fill="url(#pR)"/>
<polygon points="462.50,101.50 496.50,79.00 496.50,91.43" fill="url(#pB)"/>
<polygon points="462.50,101.50 496.50,91.43 496.50,101.50" fill="url(#pO)"/>
<polygon points="93.50,566.50 59.50,566.50 59.50,576.57" fill="url(#pC)"/>
<polygon points="93.50,566.50 59.50,576.57 59.50,589.00" fill="url(#pB)"/>
<polygon points="93.50,566.50 59.50,589.00 59.50,600.50 71.00,600.50" fill="url(#pO)"/>
<polygon points="93.50,566.50 71.00,600.50 83.43,600.50" fill="url(#pN)"/>
<polygon points="93.50,566.50 83.43,600.50 93.50,600.50" fill="url(#pR)"/>
<polygon points="462.50,566.50 496.50,566.50 496.50,576.57" fill="url(#pO)"/>
<polygon points="462.50,566.50 496.50,576.57 496.50,589.00" fill="url(#pN)"/>
<polygon points="462.50,566.50 496.50,589.00 496.50,600.50 485.00,600.50" fill="url(#pC)"/>
<polygon points="462.50,566.50 485.00,600.50 472.57,600.50" fill="url(#pR)"/>
<polygon points="462.50,566.50 472.57,600.50 462.50,600.50" fill="url(#pB)"/>
<rect x="93.5" y="101.5" width="16.0" height="465.0" fill="url(#pBB)"/>
<rect x="446.5" y="101.5" width="16.0" height="465.0" fill="url(#pBB)"/>
<rect x="109.5" y="101.5" width="337.0" height="16.0" fill="url(#pBB)"/>
<rect x="109.5" y="550.5" width="337.0" height="16.0" fill="url(#pBB)"/>
<rect x="109.5" y="117.5" width="337.0" height="16.0" fill="url(#pLB)"/>
<rect x="109.5" y="165.5" width="337.0" height="16.0" fill="url(#pLB)"/>
<rect x="109.5" y="486.5" width="337.0" height="16.0" fill="url(#pLB)"/>
<rect x="109.5" y="534.5" width="337.0" height="16.0" fill="url(#pLB)"/>
<rect x="109.5" y="181.5" width="16.0" height="305.0" fill="url(#pLB)"/>
<rect x="430.5" y="181.5" width="16.0" height="305.0" fill="url(#pLB)"/>
<rect x="125.5" y="181.5" width="16.0" height="305.0" fill="url(#pCR)"/>
<rect x="414.5" y="181.5" width="16.0" height="305.0" fill="url(#pCR)"/>
<rect x="141.5" y="181.5" width="273.0" height="16.0" fill="url(#pCR)"/>
<rect x="141.5" y="470.5" width="273.0" height="16.0" fill="url(#pCR)"/>
<polygon points="109.50,133.50 144.50,133.50 127.00,149.50" fill="url(#pR)"/>
<polygon points="109.50,165.50 144.50,165.50 127.00,149.50" fill="url(#pR)"/>
<polygon points="109.50,133.50 127.00,149.50 109.50,165.50" fill="url(#pCR)"/>
<polygon points="144.50,133.50 127.00,149.50 144.50,165.50" fill="url(#pCR)"/>
<polygon points="145.50,133.50 179.50,133.50 162.50,149.50" fill="url(#pO)"/>
<polygon points="145.50,165.50 179.50,165.50 162.50,149.50" fill="url(#pO)"/>
<polygon points="145.50,133.50 162.50,149.50 145.50,165.50" fill="url(#pCR)"/>
<polygon points="179.50,133.50 162.50,149.50 179.50,165.50" fill="url(#pCR)"/>
<polygon points="180.50,133.50 213.50,133.50 197.00,149.50" fill="url(#pC)"/>
<polygon points="180.50,165.50 213.50,165.50 197.00,149.50" fill="url(#pC)"/>
<polygon points="180.50,133.50 197.00,149.50 180.50,165.50" fill="url(#pCR)"/>
<polygon points="213.50,133.50 197.00,149.50 213.50,165.50" fill="url(#pCR)"/>
<polygon points="214.50,133.50 247.50,133.50 231.00,149.50" fill="url(#pR)"/>
<polygon points="214.50,165.50 247.50,165.50 231.00,149.50" fill="url(#pR)"/>
<polygon points="214.50,133.50 231.00,149.50 214.50,165.50" fill="url(#pCR)"/>
<polygon points="247.50,133.50 231.00,149.50 247.50,165.50" fill="url(#pCR)"/>
<polygon points="248.50,133.50 281.50,133.50 265.00,149.50" fill="url(#pO)"/>
<polygon points="248.50,165.50 281.50,165.50 265.00,149.50" fill="url(#pO)"/>
<polygon points="248.50,133.50 265.00,149.50 248.50,165.50" fill="url(#pCR)"/>
<polygon points="281.50,133.50 265.00,149.50 281.50,165.50" fill="url(#pCR)"/>
<polygon points="282.50,133.50 315.50,133.50 299.00,149.50" fill="url(#pC)"/>
<polygon points="282.50,165.50 315.50,165.50 299.00,149.50" fill="url(#pC)"/>
<polygon points="282.50,133.50 299.00,149.50 282.50,165.50" fill="url(#pCR)"/>
<polygon points="315.50,133.50 299.00,149.50 315.50,165.50" fill="url(#pCR)"/>
<polygon points="316.50,133.50 348.50,133.50 332.50,149.50" fill="url(#pO)"/>
<polygon points="316.50,165.50 348.50,165.50 332.50,149.50" fill="url(#pO)"/>
<polygon points="316.50,133.50 332.50,149.50 316.50,165.50" fill="url(#pCR)"/>
<polygon points="348.50,133.50 332.50,149.50 348.50,165.50" fill="url(#pCR)"/>
<polygon points="349.50,133.50 383.50,133.50 366.50,149.50" fill="url(#pR)"/>
<polygon points="349.50,165.50 383.50,165.50 366.50,149.50" fill="url(#pR)"/>
<polygon points="349.50,133.50 366.50,149.50 349.50,165.50" fill="url(#pCR)"/>
<polygon points="383.50,133.50 366.50,149.50 383.50,165.50" fill="url(#pCR)"/>
<polygon points="384.50,133.50 414.50,133.50 399.50,149.50" fill="url(#pC)"/>
<polygon points="384.50,165.50 414.50,165.50 399.50,149.50" fill="url(#pC)"/>
<polygon points="384.50,133.50 399.50,149.50 384.50,165.50" fill="url(#pCR)"/>
<polygon points="414.50,133.50 399.50,149.50 414.50,165.50" fill="url(#pCR)"/>
<polygon points="415.50,133.50 446.50,133.50 431.00,149.50" fill="url(#pO)"/>
<polygon points="415.50,165.50 446.50,165.50 431.00,149.50" fill="url(#pO)"/>
<polygon points="415.50,133.50 431.00,149.50 415.50,165.50" fill="url(#pCR)"/>
<polygon points="446.50,133.50 431.00,149.50 446.50,165.50" fill="url(#pCR)"/>
<polygon points="109.50,502.50 143.50,502.50 126.50,518.50" fill="url(#pC)"/>
<polygon points="109.50,534.50 143.50,534.50 126.50,518.50" fill="url(#pC)"/>
<polygon points="109.50,502.50 126.50,518.50 109.50,534.50" fill="url(#pCR)"/>
<polygon points="143.50,502.50 126.50,518.50 143.50,534.50" fill="url(#pCR)"/>
<polygon points="144.50,502.50 177.50,502.50 161.00,518.50" fill="url(#pO)"/>
<polygon points="144.50,534.50 177.50,534.50 161.00,518.50" fill="url(#pO)"/>
<polygon points="144.50,502.50 161.00,518.50 144.50,534.50" fill="url(#pCR)"/>
<polygon points="177.50,502.50 161.00,518.50 177.50,534.50" fill="url(#pCR)"/>
<polygon points="178.50,502.50 211.50,502.50 195.00,518.50" fill="url(#pR)"/>
<polygon points="178.50,534.50 211.50,534.50 195.00,518.50" fill="url(#pR)"/>
<polygon points="178.50,502.50 195.00,518.50 178.50,534.50" fill="url(#pCR)"/>
<polygon points="211.50,502.50 195.00,518.50 211.50,534.50" fill="url(#pCR)"/>
<polygon points="212.50,502.50 244.50,502.50 228.50,518.50" fill="url(#pC)"/>
<polygon points="212.50,534.50 244.50,534.50 228.50,518.50" fill="url(#pC)"/>
<polygon points="212.50,502.50 228.50,518.50 212.50,534.50" fill="url(#pCR)"/>
<polygon points="244.50,502.50 228.50,518.50 244.50,534.50" fill="url(#pCR)"/>
<rect x="245" y="502.5" width="1" height="32.0" fill="url(#pCR)"/>
<polygon points="246.50,502.50 281.50,502.50 264.00,518.50" fill="url(#pO)"/>
<polygon points="246.50,534.50 281.50,534.50 264.00,518.50" fill="url(#pO)"/>
<polygon points="246.50,502.50 264.00,518.50 246.50,534.50" fill="url(#pCR)"/>
<polygon points="281.50,502.50 264.00,518.50 281.50,534.50" fill="url(#pCR)"/>
<polygon points="282.50,502.50 314.50,502.50 298.50,518.50" fill="url(#pR)"/>
<polygon points="282.50,534.50 314.50,534.50 298.50,518.50" fill="url(#pR)"/>
<polygon points="282.50,502.50 298.50,518.50 282.50,534.50" fill="url(#pCR)"/>
<polygon points="314.50,502.50 298.50,518.50 314.50,534.50" fill="url(#pCR)"/>
<polygon points="315.50,502.50 348.50,502.50 332.00,518.50" fill="url(#pO)"/>
<polygon points="315.50,534.50 348.50,534.50 332.00,518.50" fill="url(#pO)"/>
<polygon points="315.50,502.50 332.00,518.50 315.50,534.50" fill="url(#pCR)"/>
<polygon points="348.50,502.50 332.00,518.50 348.50,534.50" fill="url(#pCR)"/>
<polygon points="349.50,502.50 380.50,502.50 365.00,518.50" fill="url(#pC)"/>
<polygon points="349.50,534.50 380.50,534.50 365.00,518.50" fill="url(#pC)"/>
<polygon points="349.50,502.50 365.00,518.50 349.50,534.50" fill="url(#pCR)"/>
<polygon points="380.50,502.50 365.00,518.50 380.50,534.50" fill="url(#pCR)"/>
<rect x="381" y="502.5" width="1" height="32.0" fill="url(#pCR)"/>
<polygon points="382.50,502.50 413.50,502.50 398.00,518.50" fill="url(#pR)"/>
<polygon points="382.50,534.50 413.50,534.50 398.00,518.50" fill="url(#pR)"/>
<polygon points="382.50,502.50 398.00,518.50 382.50,534.50" fill="url(#pCR)"/>
<polygon points="413.50,502.50 398.00,518.50 413.50,534.50" fill="url(#pCR)"/>
<polygon points="414.50,502.50 446.50,502.50 430.50,518.50" fill="url(#pO)"/>
<polygon points="414.50,534.50 446.50,534.50 430.50,518.50" fill="url(#pO)"/>
<polygon points="414.50,502.50 430.50,518.50 414.50,534.50" fill="url(#pCR)"/>
<polygon points="446.50,502.50 430.50,518.50 446.50,534.50" fill="url(#pCR)"/>
<rect x="141.5" y="197.5" width="16.0" height="16.0" fill="url(#pN)"/>
<rect x="157.5" y="197.5" width="16.0" height="16.0" fill="url(#pR)"/>
<rect x="173.5" y="197.5" width="16.0" height="16.0" fill="url(#pB)"/>
<rect x="189.5" y="197.5" width="16.0" height="16.0" fill="url(#pN)"/>
<rect x="205.5" y="197.5" width="16.0" height="16.0" fill="url(#pR)"/>
<rect x="221.5" y="197.5" width="16.0" height="16.0" fill="url(#pO)"/>
<rect x="237.5" y="197.5" width="16.0" height="16.0" fill="url(#pN)"/>
<rect x="253.5" y="197.5" width="16.0" height="16.0" fill="url(#pR)"/>
<rect x="269.5" y="197.5" width="17.0" height="16.0" fill="url(#pN)"/>
<rect x="286.5" y="197.5" width="16.0" height="16.0" fill="url(#pB)"/>
<rect x="302.5" y="197.5" width="16.0" height="16.0" fill="url(#pR)"/>
<rect x="318.5" y="197.5" width="16.0" height="16.0" fill="url(#pN)"/>
<rect x="334.5" y="197.5" width="16.0" height="16.0" fill="url(#pB)"/>
<rect x="350.5" y="197.5" width="16.0" height="16.0" fill="url(#pC)"/>
<rect x="366.5" y="197.5" width="16.0" height="16.0" fill="url(#pN)"/>
<rect x="382.5" y="197.5" width="16.0" height="16.0" fill="url(#pC)"/>
<rect x="398.5" y="197.5" width="16.0" height="16.0" fill="url(#pB)"/>
<rect x="141.5" y="213.5" width="16.0" height="16.0" fill="url(#pC)"/>
<rect x="157.5" y="213.5" width="16.0" height="16.0" fill="url(#pO)"/>
<rect x="173.5" y="213.5" width="16.0" height="16.0" fill="url(#pR)"/>
<rect x="189.5" y="213.5" width="16.0" height="16.0" fill="url(#pB)"/>
<rect x="205.5" y="213.5" width="16.0" height="16.0" fill="url(#pO)"/>
<rect x="221.5" y="213.5" width="16.0" height="16.0" fill="url(#pC)"/>
<rect x="237.5" y="213.5" width="16.0" height="16.0" fill="url(#pB)"/>
<rect x="253.5" y="213.5" width="16.0" height="16.0" fill="url(#pO)"/>
<rect x="269.5" y="213.5" width="17.0" height="16.0" fill="url(#pR)"/>
<rect x="286.5" y="213.5" width="16.0" height="16.0" fill="url(#pC)"/>
<rect x="302.5" y="213.5" width="16.0" height="16.0" fill="url(#pO)"/>
<rect x="318.5" y="213.5" width="16.0" height="16.0" fill="url(#pB)"/>
<rect x="334.5" y="213.5" width="16.0" height="16.0" fill="url(#pR)"/>
<rect x="350.5" y="213.5" width="16.0" height="16.0" fill="url(#pO)"/>
<rect x="366.5" y="213.5" width="16.0" height="16.0" fill="url(#pB)"/>
<rect x="382.5" y="213.5" width="16.0" height="16.0" fill="url(#pO)"/>
<rect x="398.5" y="213.5" width="16.0" height="16.0" fill="url(#pR)"/>
<rect x="141.5" y="229.5" width="16.0" height="16.0" fill="url(#pB)"/>
<rect x="157.5" y="229.5" width="16.0" height="16.0" fill="url(#pC)"/>
<rect x="173.5" y="229.5" width="16.0" height="16.0" fill="url(#pN)"/>
<rect x="189.5" y="229.5" width="16.0" height="16.0" fill="url(#pR)"/>
<rect x="205.5" y="229.5" width="16.0" height="16.0" fill="url(#pC)"/>
<rect x="221.5" y="229.5" width="16.0" height="16.0" fill="url(#pN)"/>
<rect x="237.5" y="229.5" width="16.0" height="16.0" fill="url(#pO)"/>
<rect x="253.5" y="229.5" width="16.0" height="16.0" fill="url(#pC)"/>
<rect x="269.5" y="229.5" width="17.0" height="16.0" fill="url(#pN)"/>
<rect x="286.5" y="229.5" width="16.0" height="16.0" fill="url(#pO)"/>
<rect x="302.5" y="229.5" width="16.0" height="16.0" fill="url(#pC)"/>
<rect x="318.5" y="229.5" width="16.0" height="16.0" fill="url(#pN)"/>
<rect x="334.5" y="229.5" width="16.0" height="16.0" fill="url(#pO)"/>
<rect x="350.5" y="229.5" width="16.0" height="16.0" fill="url(#pC)"/>
<rect x="366.5" y="229.5" width="16.0" height="16.0" fill="url(#pR)"/>
<rect x="382.5" y="229.5" width="16.0" height="16.0" fill="url(#pB)"/>
<rect x="398.5" y="229.5" width="16.0" height="16.0" fill="url(#pO)"/>
<rect x="141.5" y="245.5" width="16.0" height="16.0" fill="url(#pN)"/>
<rect x="157.5" y="245.5" width="16.0" height="16.0" fill="url(#pR)"/>
<rect x="173.5" y="245.5" width="16.0" height="16.0" fill="url(#pN)"/>
<rect x="366.5" y="245.5" width="16.0" height="16.0" fill="url(#pN)"/>
<rect x="382.5" y="245.5" width="16.0" height="16.0" fill="url(#pR)"/>
<rect x="398.5" y="245.5" width="16.0" height="16.0" fill="url(#pN)"/>
<rect x="141.5" y="261.5" width="16.0" height="16.0" fill="url(#pB)"/>
<rect x="157.5" y="261.5" width="16.0" height="16.0" fill="url(#pO)"/>
<rect x="173.5" y="261.5" width="16.0" height="16.0" fill="url(#pR)"/>
<rect x="366.5" y="261.5" width="16.0" height="16.0" fill="url(#pC)"/>
<rect x="382.5" y="261.5" width="16.0" height="16.0" fill="url(#pO)"/>
<rect x="398.5" y="261.5" width="16.0" height="16.0" fill="url(#pR)"/>
<rect x="141.5" y="277.5" width="16.0" height="16.0" fill="url(#pR)"/>
<rect x="157.5" y="277.5" width="16.0" height="16.0" fill="url(#pC)"/>
<rect x="173.5" y="277.5" width="16.0" height="16.0" fill="url(#pO)"/>
<rect x="366.5" y="277.5" width="16.0" height="16.0" fill="url(#pR)"/>
<rect x="382.5" y="277.5" width="16.0" height="16.0" fill="url(#pC)"/>
<rect x="398.5" y="277.5" width="16.0" height="16.0" fill="url(#pN)"/>
<rect x="141.5" y="293.5" width="16.0" height="16.0" fill="url(#pN)"/>
<rect x="157.5" y="293.5" width="16.0" height="16.0" fill="url(#pB)"/>
<rect x="173.5" y="293.5" width="16.0" height="16.0" fill="url(#pN)"/>
<rect x="366.5" y="293.5" width="16.0" height="16.0" fill="url(#pN)"/>
<rect x="382.5" y="293.5" width="16.0" height="16.0" fill="url(#pR)"/>
<rect x="398.5" y="293.5" width="16.0" height="16.0" fill="url(#pB)"/>
<rect x="141.5" y="309.5" width="16.0" height="17.0" fill="url(#pC)"/>
<rect x="157.5" y="309.5" width="16.0" height="17.0" fill="url(#pO)"/>
<rect x="173.5" y="309.5" width="16.0" height="17.0" fill="url(#pR)"/>
<rect x="366.5" y="309.5" width="16.0" height="17.0" fill="url(#pB)"/>
<rect x="382.5" y="309.5" width="16.0" height="17.0" fill="url(#pO)"/>
<rect x="398.5" y="309.5" width="16.0" height="17.0" fill="url(#pR)"/>
<rect x="141.5" y="326.5" width="16.0" height="16.0" fill="url(#pR)"/>
<rect x="157.5" y="326.5" width="16.0" height="16.0" fill="url(#pC)"/>
<rect x="173.5" y="326.5" width="16.0" height="16.0" fill="url(#pB)"/>
<rect x="366.5" y="326.5" width="16.0" height="16.0" fill="url(#pO)"/>
<rect x="382.5" y="326.5" width="16.0" height="16.0" fill="url(#pC)"/>
<rect x="398.5" y="326.5" width="16.0" height="16.0" fill="url(#pN)"/>
<rect x="141.5" y="342.5" width="16.0" height="16.0" fill="url(#pN)"/>
<rect x="157.5" y="342.5" width="16.0" height="16.0" fill="url(#pR)"/>
<rect x="173.5" y="342.5" width="16.0" height="16.0" fill="url(#pN)"/>
<rect x="366.5" y="342.5" width="16.0" height="16.0" fill="url(#pN)"/>
<rect x="382.5" y="342.5" width="16.0" height="16.0" fill="url(#pB)"/>
<rect x="398.5" y="342.5" width="16.0" height="16.0" fill="url(#pR)"/>
<rect x="141.5" y="358.5" width="16.0" height="16.0" fill="url(#pR)"/>
<rect x="157.5" y="358.5" width="16.0" height="16.0" fill="url(#pO)"/>
<rect x="173.5" y="358.5" width="16.0" height="16.0" fill="url(#pC)"/>
<rect x="366.5" y="358.5" width="16.0" height="16.0" fill="url(#pR)"/>
<rect x="382.5" y="358.5" width="16.0" height="16.0" fill="url(#pO)"/>
<rect x="398.5" y="358.5" width="16.0" height="16.0" fill="url(#pB)"/>
<rect x="141.5" y="374.5" width="16.0" height="16.0" fill="url(#pO)"/>
<rect x="157.5" y="374.5" width="16.0" height="16.0" fill="url(#pC)"/>
<rect x="173.5" y="374.5" width="16.0" height="16.0" fill="url(#pN)"/>
<rect x="366.5" y="374.5" width="16.0" height="16.0" fill="url(#pB)"/>
<rect x="382.5" y="374.5" width="16.0" height="16.0" fill="url(#pC)"/>
<rect x="398.5" y="374.5" width="16.0" height="16.0" fill="url(#pN)"/>
<rect x="141.5" y="390.5" width="16.0" height="16.0" fill="url(#pR)"/>
<rect x="157.5" y="390.5" width="16.0" height="16.0" fill="url(#pN)"/>
<rect x="173.5" y="390.5" width="16.0" height="16.0" fill="url(#pB)"/>
<rect x="366.5" y="390.5" width="16.0" height="16.0" fill="url(#pO)"/>
<rect x="382.5" y="390.5" width="16.0" height="16.0" fill="url(#pR)"/>
<rect x="398.5" y="390.5" width="16.0" height="16.0" fill="url(#pB)"/>
<rect x="141.5" y="406.5" width="16.0" height="16.0" fill="url(#pB)"/>
<rect x="157.5" y="406.5" width="16.0" height="16.0" fill="url(#pO)"/>
<rect x="173.5" y="406.5" width="16.0" height="16.0" fill="url(#pR)"/>
<rect x="366.5" y="406.5" width="16.0" height="16.0" fill="url(#pB)"/>
<rect x="382.5" y="406.5" width="16.0" height="16.0" fill="url(#pO)"/>
<rect x="398.5" y="406.5" width="16.0" height="16.0" fill="url(#pC)"/>
<rect x="141.5" y="422.5" width="16.0" height="16.0" fill="url(#pN)"/>
<rect x="157.5" y="422.5" width="16.0" height="16.0" fill="url(#pR)"/>
<rect x="173.5" y="422.5" width="16.0" height="16.0" fill="url(#pC)"/>
<rect x="189.5" y="422.5" width="16.0" height="16.0" fill="url(#pN)"/>
<rect x="205.5" y="422.5" width="16.0" height="16.0" fill="url(#pR)"/>
<rect x="221.5" y="422.5" width="16.0" height="16.0" fill="url(#pB)"/>
<rect x="237.5" y="422.5" width="16.0" height="16.0" fill="url(#pN)"/>
<rect x="253.5" y="422.5" width="16.0" height="16.0" fill="url(#pR)"/>
<rect x="269.5" y="422.5" width="17.0" height="16.0" fill="url(#pO)"/>
<rect x="286.5" y="422.5" width="16.0" height="16.0" fill="url(#pN)"/>
<rect x="302.5" y="422.5" width="16.0" height="16.0" fill="url(#pR)"/>
<rect x="318.5" y="422.5" width="16.0" height="16.0" fill="url(#pB)"/>
<rect x="334.5" y="422.5" width="16.0" height="16.0" fill="url(#pN)"/>
<rect x="350.5" y="422.5" width="16.0" height="16.0" fill="url(#pR)"/>
<rect x="366.5" y="422.5" width="16.0" height="16.0" fill="url(#pN)"/>
<rect x="382.5" y="422.5" width="16.0" height="16.0" fill="url(#pR)"/>
<rect x="398.5" y="422.5" width="16.0" height="16.0" fill="url(#pB)"/>
<rect x="141.5" y="438.5" width="16.0" height="16.0" fill="url(#pC)"/>
<rect x="157.5" y="438.5" width="16.0" height="16.0" fill="url(#pO)"/>
<rect x="173.5" y="438.5" width="16.0" height="16.0" fill="url(#pR)"/>
<rect x="189.5" y="438.5" width="16.0" height="16.0" fill="url(#pB)"/>
<rect x="205.5" y="438.5" width="16.0" height="16.0" fill="url(#pO)"/>
<rect x="221.5" y="438.5" width="16.0" height="16.0" fill="url(#pC)"/>
<rect x="237.5" y="438.5" width="16.0" height="16.0" fill="url(#pB)"/>
<rect x="253.5" y="438.5" width="16.0" height="16.0" fill="url(#pO)"/>
<rect x="269.5" y="438.5" width="17.0" height="16.0" fill="url(#pR)"/>
<rect x="286.5" y="438.5" width="16.0" height="16.0" fill="url(#pC)"/>
<rect x="302.5" y="438.5" width="16.0" height="16.0" fill="url(#pO)"/>
<rect x="318.5" y="438.5" width="16.0" height="16.0" fill="url(#pR)"/>
<rect x="334.5" y="438.5" width="16.0" height="16.0" fill="url(#pC)"/>
<rect x="350.5" y="438.5" width="16.0" height="16.0" fill="url(#pO)"/>
<rect x="366.5" y="438.5" width="16.0" height="16.0" fill="url(#pR)"/>
<rect x="382.5" y="438.5" width="16.0" height="16.0" fill="url(#pO)"/>
<rect x="398.5" y="438.5" width="16.0" height="16.0" fill="url(#pC)"/>
<rect x="141.5" y="454.5" width="16.0" height="16.0" fill="url(#pB)"/>
<rect x="157.5" y="454.5" width="16.0" height="16.0" fill="url(#pC)"/>
<rect x="173.5" y="454.5" width="16.0" height="16.0" fill="url(#pN)"/>
<rect x="189.5" y="454.5" width="16.0" height="16.0" fill="url(#pO)"/>
<rect x="205.5" y="454.5" width="16.0" height="16.0" fill="url(#pC)"/>
<rect x="221.5" y="454.5" width="16.0" height="16.0" fill="url(#pN)"/>
<rect x="237.5" y="454.5" width="16.0" height="16.0" fill="url(#pR)"/>
<rect x="253.5" y="454.5" width="16.0" height="16.0" fill="url(#pC)"/>
<rect x="269.5" y="454.5" width="17.0" height="16.0" fill="url(#pN)"/>
<rect x="286.5" y="454.5" width="16.0" height="16.0" fill="url(#pB)"/>
<rect x="302.5" y="454.5" width="16.0" height="16.0" fill="url(#pC)"/>
<rect x="318.5" y="454.5" width="16.0" height="16.0" fill="url(#pN)"/>
<rect x="334.5" y="454.5" width="16.0" height="16.0" fill="url(#pO)"/>
<rect x="350.5" y="454.5" width="16.0" height="16.0" fill="url(#pC)"/>
<rect x="366.5" y="454.5" width="16.0" height="16.0" fill="url(#pN)"/>
<rect x="382.5" y="454.5" width="16.0" height="16.0" fill="url(#pB)"/>
<rect x="398.5" y="454.5" width="16.0" height="16.0" fill="url(#pO)"/>
<rect x="189.5" y="245.5" width="177.0" height="16.0" fill="url(#pCR)"/>
<rect x="189.5" y="406.5" width="177.0" height="16.0" fill="url(#pCR)"/>
<rect x="189.5" y="261.5" width="16.0" height="145.0" fill="url(#pCR)"/>
<rect x="350.5" y="261.5" width="16.0" height="145.0" fill="url(#pCR)"/>
<rect x="205.5" y="261.5" width="24.0" height="24.0" fill="url(#pCR)"/>
<polygon points="205.50,261.50 229.50,261.50 229.50,285.50" fill="url(#pR)"/>
<rect x="229.5" y="261.5" width="24.0" height="24.0" fill="url(#pCR)"/>
<polygon points="253.50,261.50 253.50,285.50 229.50,285.50" fill="url(#pR)"/>
<rect x="205.5" y="285.5" width="24.0" height="24.0" fill="url(#pCR)"/>
<polygon points="205.50,285.50 229.50,285.50 205.50,309.50" fill="url(#pR)"/>
<rect x="229.5" y="285.5" width="24.0" height="24.0" fill="url(#pCR)"/>
<polygon points="229.50,285.50 253.50,309.50 229.50,309.50" fill="url(#pR)"/>
<rect x="253.5" y="261.5" width="24.0" height="24.0" fill="url(#pCR)"/>
<polygon points="253.50,261.50 277.50,261.50 277.50,285.50" fill="url(#pN)"/>
<rect x="277.5" y="261.5" width="25.0" height="24.0" fill="url(#pCR)"/>
<polygon points="302.50,261.50 302.50,285.50 277.50,285.50" fill="url(#pN)"/>
<rect x="253.5" y="285.5" width="24.0" height="24.0" fill="url(#pCR)"/>
<polygon points="253.50,285.50 277.50,285.50 253.50,309.50" fill="url(#pN)"/>
<rect x="277.5" y="285.5" width="25.0" height="24.0" fill="url(#pCR)"/>
<polygon points="277.50,285.50 302.50,309.50 277.50,309.50" fill="url(#pN)"/>
<rect x="302.5" y="261.5" width="24.0" height="24.0" fill="url(#pCR)"/>
<polygon points="302.50,261.50 326.50,261.50 326.50,285.50" fill="url(#pC)"/>
<rect x="326.5" y="261.5" width="24.0" height="24.0" fill="url(#pCR)"/>
<polygon points="350.50,261.50 350.50,285.50 326.50,285.50" fill="url(#pC)"/>
<rect x="302.5" y="285.5" width="24.0" height="24.0" fill="url(#pCR)"/>
<polygon points="302.50,285.50 326.50,285.50 302.50,309.50" fill="url(#pC)"/>
<rect x="326.5" y="285.5" width="24.0" height="24.0" fill="url(#pCR)"/>
<polygon points="326.50,285.50 350.50,309.50 326.50,309.50" fill="url(#pC)"/>
<rect x="205.5" y="309.5" width="24.0" height="25.0" fill="url(#pCR)"/>
<polygon points="205.50,309.50 229.50,309.50 229.50,334.50" fill="url(#pN)"/>
<rect x="229.5" y="309.5" width="24.0" height="25.0" fill="url(#pCR)"/>
<polygon points="253.50,309.50 253.50,334.50 229.50,334.50" fill="url(#pN)"/>
<rect x="205.5" y="334.5" width="24.0" height="24.0" fill="url(#pCR)"/>
<polygon points="205.50,334.50 229.50,334.50 205.50,358.50" fill="url(#pN)"/>
<rect x="229.5" y="334.5" width="24.0" height="24.0" fill="url(#pCR)"/>
<polygon points="229.50,334.50 253.50,358.50 229.50,358.50" fill="url(#pN)"/>
<rect x="253.5" y="309.5" width="24.0" height="25.0" fill="url(#pCR)"/>
<polygon points="253.50,309.50 277.50,309.50 277.50,334.50" fill="url(#pC)"/>
<rect x="277.5" y="309.5" width="25.0" height="25.0" fill="url(#pCR)"/>
<polygon points="302.50,309.50 302.50,334.50 277.50,334.50" fill="url(#pC)"/>
<rect x="253.5" y="334.5" width="24.0" height="24.0" fill="url(#pCR)"/>
<polygon points="253.50,334.50 277.50,334.50 253.50,358.50" fill="url(#pC)"/>
<rect x="277.5" y="334.5" width="25.0" height="24.0" fill="url(#pCR)"/>
<polygon points="277.50,334.50 302.50,358.50 277.50,358.50" fill="url(#pC)"/>
<rect x="302.5" y="309.5" width="24.0" height="25.0" fill="url(#pCR)"/>
<polygon points="302.50,309.50 326.50,309.50 326.50,334.50" fill="url(#pR)"/>
<rect x="326.5" y="309.5" width="24.0" height="25.0" fill="url(#pCR)"/>
<polygon points="350.50,309.50 350.50,334.50 326.50,334.50" fill="url(#pR)"/>
<rect x="302.5" y="334.5" width="24.0" height="24.0" fill="url(#pCR)"/>
<polygon points="302.50,334.50 326.50,334.50 302.50,358.50" fill="url(#pR)"/>
<rect x="326.5" y="334.5" width="24.0" height="24.0" fill="url(#pCR)"/>
<polygon points="326.50,334.50 350.50,358.50 326.50,358.50" fill="url(#pR)"/>
<rect x="205.5" y="358.5" width="24.0" height="24.0" fill="url(#pCR)"/>
<polygon points="205.50,358.50 229.50,358.50 229.50,382.50" fill="url(#pC)"/>
<rect x="229.5" y="358.5" width="24.0" height="24.0" fill="url(#pCR)"/>
<polygon points="253.50,358.50 253.50,382.50 229.50,382.50" fill="url(#pC)"/>
<rect x="205.5" y="382.5" width="24.0" height="24.0" fill="url(#pCR)"/>
<polygon points="205.50,382.50 229.50,382.50 205.50,406.50" fill="url(#pC)"/>
<rect x="229.5" y="382.5" width="24.0" height="24.0" fill="url(#pCR)"/>
<polygon points="229.50,382.50 253.50,406.50 229.50,406.50" fill="url(#pC)"/>
<rect x="253.5" y="358.5" width="24.0" height="24.0" fill="url(#pCR)"/>
<polygon points="253.50,358.50 277.50,358.50 277.50,382.50" fill="url(#pR)"/>
<rect x="277.5" y="358.5" width="25.0" height="24.0" fill="url(#pCR)"/>
<polygon points="302.50,358.50 302.50,382.50 277.50,382.50" fill="url(#pR)"/>
<rect x="253.5" y="382.5" width="24.0" height="24.0" fill="url(#pCR)"/>
<polygon points="253.50,382.50 277.50,382.50 253.50,406.50" fill="url(#pR)"/>
<rect x="277.5" y="382.5" width="25.0" height="24.0" fill="url(#pCR)"/>
<polygon points="277.50,382.50 302.50,406.50 277.50,406.50" fill="url(#pR)"/>
<rect x="302.5" y="358.5" width="24.0" height="24.0" fill="url(#pCR)"/>
<polygon points="302.50,358.50 326.50,358.50 326.50,382.50" fill="url(#pN)"/>
<rect x="326.5" y="358.5" width="24.0" height="24.0" fill="url(#pCR)"/>
<polygon points="350.50,358.50 350.50,382.50 326.50,382.50" fill="url(#pN)"/>
<rect x="302.5" y="382.5" width="24.0" height="24.0" fill="url(#pCR)"/>
<polygon points="302.50,382.50 326.50,382.50 302.50,406.50" fill="url(#pN)"/>
<rect x="326.5" y="382.5" width="24.0" height="24.0" fill="url(#pCR)"/>
<polygon points="326.50,382.50 350.50,406.50 326.50,406.50" fill="url(#pN)"/>
<path d="M109.50 133.50L144.50 165.50M144.50 133.50L109.50 165.50M145.50 133.50L179.50 165.50M179.50 133.50L145.50 165.50M180.50 133.50L213.50 165.50M213.50 133.50L180.50 165.50M214.50 133.50L247.50 165.50M247.50 133.50L214.50 165.50M248.50 133.50L281.50 165.50M281.50 133.50L248.50 165.50M282.50 133.50L315.50 165.50M315.50 133.50L282.50 165.50M316.50 133.50L348.50 165.50M348.50 133.50L316.50 165.50M349.50 133.50L383.50 165.50M383.50 133.50L349.50 165.50M384.50 133.50L414.50 165.50M414.50 133.50L384.50 165.50M415.50 133.50L446.50 165.50M446.50 133.50L415.50 165.50M109.50 502.50L143.50 534.50M143.50 502.50L109.50 534.50M144.50 502.50L177.50 534.50M177.50 502.50L144.50 534.50M178.50 502.50L211.50 534.50M211.50 502.50L178.50 534.50M212.50 502.50L244.50 534.50M244.50 502.50L212.50 534.50M246.50 502.50L281.50 534.50M281.50 502.50L246.50 534.50M282.50 502.50L314.50 534.50M314.50 502.50L282.50 534.50M315.50 502.50L348.50 534.50M348.50 502.50L315.50 534.50M349.50 502.50L380.50 534.50M380.50 502.50L349.50 534.50M382.50 502.50L413.50 534.50M413.50 502.50L382.50 534.50M414.50 502.50L446.50 534.50M446.50 502.50L414.50 534.50M205.50 261.50L229.50 285.50M253.50 261.50L229.50 285.50M229.50 285.50L205.50 309.50M229.50 285.50L253.50 309.50M253.50 261.50L277.50 285.50M302.50 261.50L277.50 285.50M277.50 285.50L253.50 309.50M277.50 285.50L302.50 309.50M302.50 261.50L326.50 285.50M350.50 261.50L326.50 285.50M326.50 285.50L302.50 309.50M326.50 285.50L350.50 309.50M205.50 309.50L229.50 334.50M253.50 309.50L229.50 334.50M229.50 334.50L205.50 358.50M229.50 334.50L253.50 358.50M253.50 309.50L277.50 334.50M302.50 309.50L277.50 334.50M277.50 334.50L253.50 358.50M277.50 334.50L302.50 358.50M302.50 309.50L326.50 334.50M350.50 309.50L326.50 334.50M326.50 334.50L302.50 358.50M326.50 334.50L350.50 358.50M205.50 358.50L229.50 382.50M253.50 358.50L229.50 382.50M229.50 382.50L205.50 406.50M229.50 382.50L253.50 406.50M253.50 358.50L277.50 382.50M302.50 358.50L277.50 382.50M277.50 382.50L253.50 406.50M277.50 382.50L302.50 406.50M302.50 358.50L326.50 382.50M350.50 358.50L326.50 382.50M326.50 382.50L302.50 406.50M326.50 382.50L350.50 406.50M93.50 101.50L83.43 67.50M93.50 101.50L71.00 67.50M93.50 101.50L59.50 79.00M93.50 101.50L59.50 91.43M462.50 101.50L472.57 67.50M462.50 101.50L485.00 67.50M462.50 101.50L496.50 79.00M462.50 101.50L496.50 91.43M93.50 566.50L59.50 576.57M93.50 566.50L59.50 589.00M93.50 566.50L71.00 600.50M93.50 566.50L83.43 600.50M462.50 566.50L496.50 576.57M462.50 566.50L496.50 589.00M462.50 566.50L485.00 600.50M462.50 566.50L472.57 600.50" class="ln"/>
<path d="M109.5 133.0V166.0M144.5 133.0V166.0M145.5 133.0V166.0M179.5 133.0V166.0M180.5 133.0V166.0M213.5 133.0V166.0M214.5 133.0V166.0M247.5 133.0V166.0M248.5 133.0V166.0M281.5 133.0V166.0M282.5 133.0V166.0M315.5 133.0V166.0M316.5 133.0V166.0M348.5 133.0V166.0M349.5 133.0V166.0M383.5 133.0V166.0M384.5 133.0V166.0M414.5 133.0V166.0M415.5 133.0V166.0M446.5 133.0V166.0M109.5 502.0V535.0M143.5 502.0V535.0M144.5 502.0V535.0M177.5 502.0V535.0M178.5 502.0V535.0M211.5 502.0V535.0M212.5 502.0V535.0M244.5 502.0V535.0M246.5 502.0V535.0M281.5 502.0V535.0M282.5 502.0V535.0M314.5 502.0V535.0M315.5 502.0V535.0M348.5 502.0V535.0M349.5 502.0V535.0M380.5 502.0V535.0M382.5 502.0V535.0M413.5 502.0V535.0M414.5 502.0V535.0M446.5 502.0V535.0M59.0 67.5H497.0M59.0 600.5H497.0M59.5 67.0V601.0M496.5 67.0V601.0M59.0 101.5H497.0M59.0 566.5H497.0M93.5 67.0V601.0M462.5 67.0V601.0M109.5 67.0V102.0M109.5 566.0V601.0M125.5 67.0V102.0M125.5 566.0V601.0M141.5 67.0V102.0M141.5 566.0V601.0M157.5 67.0V102.0M157.5 566.0V601.0M173.5 67.0V102.0M173.5 566.0V601.0M189.5 67.0V102.0M189.5 566.0V601.0M205.5 67.0V102.0M205.5 566.0V601.0M221.5 67.0V102.0M221.5 566.0V601.0M237.5 67.0V102.0M237.5 566.0V601.0M253.5 67.0V102.0M253.5 566.0V601.0M269.5 67.0V102.0M269.5 566.0V601.0M286.5 67.0V102.0M286.5 566.0V601.0M302.5 67.0V102.0M302.5 566.0V601.0M318.5 67.0V102.0M318.5 566.0V601.0M334.5 67.0V102.0M334.5 566.0V601.0M350.5 67.0V102.0M350.5 566.0V601.0M366.5 67.0V102.0M366.5 566.0V601.0M382.5 67.0V102.0M382.5 566.0V601.0M398.5 67.0V102.0M398.5 566.0V601.0M414.5 67.0V102.0M414.5 566.0V601.0M430.5 67.0V102.0M430.5 566.0V601.0M446.5 67.0V102.0M446.5 566.0V601.0M59.0 117.5H94.0M462.0 117.5H497.0M59.0 133.5H94.0M462.0 133.5H497.0M59.0 149.5H94.0M462.0 149.5H497.0M59.0 165.5H94.0M462.0 165.5H497.0M59.0 181.5H94.0M462.0 181.5H497.0M59.0 197.5H94.0M462.0 197.5H497.0M59.0 213.5H94.0M462.0 213.5H497.0M59.0 229.5H94.0M462.0 229.5H497.0M59.0 245.5H94.0M462.0 245.5H497.0M59.0 261.5H94.0M462.0 261.5H497.0M59.0 277.5H94.0M462.0 277.5H497.0M59.0 293.5H94.0M462.0 293.5H497.0M59.0 309.5H94.0M462.0 309.5H497.0M59.0 326.5H94.0M462.0 326.5H497.0M59.0 342.5H94.0M462.0 342.5H497.0M59.0 358.5H94.0M462.0 358.5H497.0M59.0 374.5H94.0M462.0 374.5H497.0M59.0 390.5H94.0M462.0 390.5H497.0M59.0 406.5H94.0M462.0 406.5H497.0M59.0 422.5H94.0M462.0 422.5H497.0M59.0 438.5H94.0M462.0 438.5H497.0M59.0 454.5H94.0M462.0 454.5H497.0M59.0 470.5H94.0M462.0 470.5H497.0M59.0 486.5H94.0M462.0 486.5H497.0M59.0 502.5H94.0M462.0 502.5H497.0M59.0 518.5H94.0M462.0 518.5H497.0M59.0 534.5H94.0M462.0 534.5H497.0M59.0 550.5H94.0M462.0 550.5H497.0M109.5 101.0V567.0M446.5 101.0V567.0M109.0 117.5H447.0M109.0 550.5H447.0M109.0 133.5H447.0M109.0 165.5H447.0M109.0 181.5H447.0M109.0 486.5H447.0M109.0 502.5H447.0M109.0 534.5H447.0M125.5 181.0V487.0M430.5 181.0V487.0M141.5 181.0V487.0M414.5 181.0V487.0M141.0 197.5H415.0M141.0 470.5H415.0M157.5 197.0V471.0M141.0 213.5H415.0M173.5 197.0V471.0M141.0 229.5H415.0M189.5 197.0V471.0M141.0 245.5H415.0M205.5 197.0V246.0M205.5 422.0V471.0M141.0 261.5H190.0M366.0 261.5H415.0M221.5 197.0V246.0M221.5 422.0V471.0M141.0 277.5H190.0M366.0 277.5H415.0M237.5 197.0V246.0M237.5 422.0V471.0M141.0 293.5H190.0M366.0 293.5H415.0M253.5 197.0V246.0M253.5 422.0V471.0M141.0 309.5H190.0M366.0 309.5H415.0M269.5 197.0V246.0M269.5 422.0V471.0M141.0 326.5H190.0M366.0 326.5H415.0M286.5 197.0V246.0M286.5 422.0V471.0M141.0 342.5H190.0M366.0 342.5H415.0M302.5 197.0V246.0M302.5 422.0V471.0M141.0 358.5H190.0M366.0 358.5H415.0M318.5 197.0V246.0M318.5 422.0V471.0M141.0 374.5H190.0M366.0 374.5H415.0M334.5 197.0V246.0M334.5 422.0V471.0M141.0 390.5H190.0M366.0 390.5H415.0M350.5 197.0V246.0M350.5 422.0V471.0M141.0 406.5H190.0M366.0 406.5H415.0M366.5 197.0V471.0M141.0 422.5H415.0M382.5 197.0V471.0M141.0 438.5H415.0M398.5 197.0V471.0M141.0 454.5H415.0M189.0 261.5H367.0M189.0 406.5H367.0M205.5 261.0V407.0M350.5 261.0V407.0M229.5 261.0V407.0M205.0 285.5H351.0M253.5 261.0V407.0M205.0 309.5H351.0M277.5 261.0V407.0M205.0 334.5H351.0M302.5 261.0V407.0M205.0 358.5H351.0M326.5 261.0V407.0M205.0 382.5H351.0" class="ln2"/>
</svg>

<!-- tabs -->
<div class="abs" style="left:24px;top:605px;width:679px;height:19px;background:#fff"></div>
<div class="abs" style="left:25px;top:605px;width:181px;height:1px;background:#000"></div>
<div class="abs" style="left:297px;top:605px;width:377px;height:1px;background:#000"></div>
<div class="abs" style="left:476px;top:606px;width:197px;height:18px;background:#f0f0f0"></div>
<div class="tab" style="left:25px;width:91px;border-left:1px solid #fff;">Layout</div>
<div class="abs" style="left:26px;top:606px;width:1px;height:17px;background:#808080"></div>
<div class="tab" style="left:116px;width:90px;border-left:1px solid #808080;">Borders</div>
<div class="abs" style="left:206px;top:605px;width:1px;height:19px;background:#000"></div>
<div class="abs" style="left:206px;top:623px;width:91px;height:1px;background:#000"></div>
<div class="abs" style="left:207px;top:606px;width:90px;height:17px;font-size:14px;line-height:19px;text-align:center;">Layer 1</div>
<div class="abs" style="left:297px;top:605px;width:1px;height:19px;background:#000"></div>
<div class="tab" style="left:298px;width:88px;">Layer 2</div>
<div class="tab" style="left:386px;width:90px;border-left:1px solid #808080;">Layer 3</div>
<div class="abs" style="left:476px;top:606px;width:1px;height:18px;background:#808080"></div>
<!-- scroll button -->
<div class="abs" style="left:673px;top:605px;width:17px;height:19px;box-sizing:border-box;background:#f0f0f0;border-top:1px solid #f8f8f8;border-left:1px solid #f8f8f8;border-right:1px solid #696969;border-bottom:1px solid #696969;"></div>
<div class="abs" style="left:674px;top:606px;width:15px;height:17px;box-sizing:border-box;border-top:1px solid #fff;border-left:1px solid #fff;border-right:1px solid #a0a0a0;border-bottom:1px solid #a0a0a0;"></div>
<svg class="abs" style="left:673px;top:605px" width="17" height="19"><polygon points="4.5,9.5 8.5,5.5 8.5,13.5" fill="#000"/></svg>
<div class="abs" style="left:690px;top:605px;width:13px;height:19px;background:#f2f2f2"></div>
<div class="abs" style="left:0;top:624px;width:703px;height:1px;background:#fafafa"></div>
<div class="abs" style="left:0;top:625px;width:703px;height:7px;background:#ececec"></div>
</body></html>
